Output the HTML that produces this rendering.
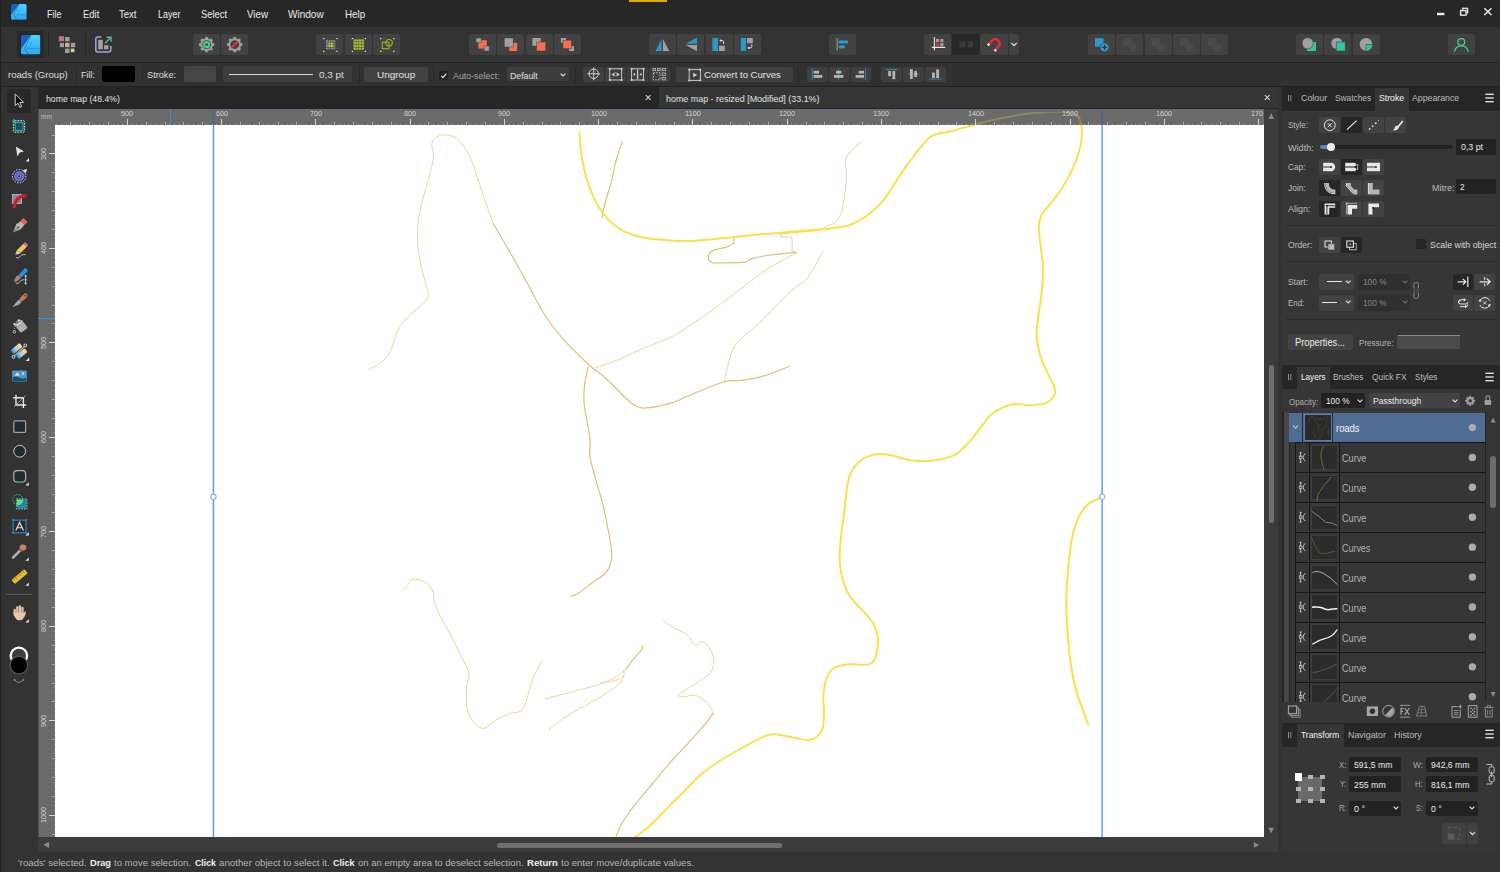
<!DOCTYPE html>
<html><head><meta charset="utf-8"><title>Affinity Designer</title>
<style>
html,body{margin:0;padding:0;background:#333333;}
body{width:1500px;height:872px;position:relative;overflow:hidden;font-family:"Liberation Sans",sans-serif;}
#r div,#r svg,#r span{position:absolute;}
#r svg{overflow:visible;}
.t{white-space:nowrap;transform-origin:0 50%;display:block;}
</style></head><body><div id="r">
<div style="left:0px;top:0px;width:1500px;height:27px;background:#272727;"></div>
<div style="left:0px;top:27px;width:1500px;height:35px;background:#333333;"></div>
<div style="left:0px;top:62px;width:1500px;height:1px;background:#212121;"></div>
<div style="left:0px;top:63px;width:1500px;height:23px;background:#313131;"></div>
<div style="left:0px;top:86px;width:1500px;height:1px;background:#212121;"></div>
<div style="left:0px;top:87px;width:38px;height:765px;background:#333333;"></div>
<div style="left:38px;top:87px;width:1240px;height:22px;background:#262626;"></div>
<div style="left:659px;top:87px;width:619px;height:21px;background:#353535;"></div>
<div style="left:38px;top:109px;width:1226px;height:16px;background:#6b6b6b;"></div>
<div style="left:38px;top:109px;width:17px;height:728px;background:#6b6b6b;"></div>
<div style="left:55px;top:125px;width:1209px;height:712px;background:#ffffff;"></div>
<div style="left:1264px;top:109px;width:14px;height:743px;background:#3c3c3c;"></div>
<div style="left:38px;top:837px;width:1240px;height:15px;background:#3c3c3c;"></div>
<div style="left:1278px;top:87px;width:4px;height:765px;background:#333333;"></div>
<div style="left:1282px;top:87px;width:218px;height:765px;background:#363636;"></div>
<div style="left:0px;top:852px;width:1500px;height:20px;background:#333333;"></div>
<div style="left:0px;top:0px;width:1px;height:872px;background:#1f1f1a;"></div>
<div style="left:629px;top:0px;width:38px;height:2px;background:#e8a700;"></div>
<svg style="left:55px;top:125px;overflow:hidden" width="1209" height="712" viewBox="55 125 1209 712"><path d="M368.5 369.6C370.4 368.5 376.7 366.0 380.2 363.2C383.8 360.4 387.5 356.5 389.8 352.5C392.2 348.6 392.8 343.6 394.5 339.4C396.1 335.1 397.1 331.1 399.8 326.9C402.5 322.8 406.6 318.3 410.5 314.5C414.3 310.6 419.9 307.1 422.9 303.8C425.9 300.6 427.8 298.5 428.2 294.9C428.7 291.4 426.7 287.8 425.4 282.5C424.1 277.1 421.7 269.7 420.4 262.9C419.1 256.1 417.9 248.7 417.6 241.6C417.2 234.5 417.4 227.4 418.3 220.2C419.2 213.1 421.1 206.0 422.9 198.9C424.7 191.8 427.2 184.7 428.9 177.6C430.7 170.5 433.1 161.9 433.6 156.2C434.0 150.6 431.2 147.0 431.8 143.8C432.4 140.5 434.8 138.2 437.1 136.7C439.5 135.2 442.8 134.6 446.0 134.9C449.3 135.2 453.4 136.1 456.7 138.4C459.9 140.8 462.9 145.0 465.6 149.1C468.2 153.3 470.3 157.4 472.7 163.3C475.1 169.3 477.4 177.6 479.8 184.7C482.2 191.8 484.7 199.5 486.9 206.0C489.2 212.5 492.2 220.8 493.3 223.8" fill="none" stroke="#eacd9a" stroke-width="0.9" stroke-linecap="round" stroke-linejoin="round"/><path d="M595.4 367.8C599.5 366.3 612.0 362.3 620.3 358.9C628.6 355.6 636.3 351.4 645.2 347.6C654.1 343.7 664.7 340.4 673.6 335.8C682.5 331.2 690.2 325.4 698.5 319.8C706.8 314.2 715.7 307.7 723.4 302.0C731.1 296.4 737.6 291.4 744.7 286.0C751.8 280.7 759.6 274.5 766.1 270.0C772.6 265.6 778.8 262.2 783.9 259.4C788.9 256.5 794.2 254.0 796.3 253.0" fill="none" stroke="#eacd9a" stroke-width="0.9" stroke-linecap="round" stroke-linejoin="round"/><path d="M796.3 252.2C795.6 252.2 792.7 252.2 792.0 252.2" fill="none" stroke="#eacd9a" stroke-width="0.9" stroke-linecap="round" stroke-linejoin="round"/><path d="M820.9 229.1C823.3 227.9 831.7 224.7 835.1 222.0C838.5 219.4 839.7 217.0 841.2 213.1C842.6 209.3 843.1 204.8 844.0 198.9C844.9 193.0 846.2 184.1 846.5 177.6C846.8 171.0 845.0 164.2 845.8 159.8C846.6 155.3 848.5 154.0 851.1 150.9C853.8 147.8 860.0 142.9 861.8 141.3" fill="none" stroke="#eacd9a" stroke-width="0.9" stroke-linecap="round" stroke-linejoin="round"/><path d="M823.0 251.2C821.8 253.4 818.8 259.8 815.9 264.7C812.9 269.6 808.7 276.8 805.2 280.7C801.6 284.5 798.7 284.3 794.5 287.8C790.4 291.4 785.6 296.7 780.3 302.0C775.0 307.4 768.4 314.2 762.5 319.8C756.6 325.4 749.5 331.4 744.7 335.8C740.0 340.3 736.7 342.0 734.1 346.5C731.4 350.9 730.4 356.6 728.7 362.5C727.1 368.4 724.9 378.8 724.1 382.0" fill="none" stroke="#eacd9a" stroke-width="0.9" stroke-linecap="round" stroke-linejoin="round"/><path d="M402.6 591.3C403.3 590.5 405.6 588.4 406.9 586.7C408.2 584.9 408.7 581.8 410.5 580.6C412.2 579.4 414.9 579.1 417.6 579.6C420.2 580.0 424.0 581.3 426.5 583.1C428.9 584.9 431.1 587.0 432.5 590.2C433.9 593.5 433.3 598.2 434.6 602.7C436.0 607.1 438.2 611.9 440.7 616.9C443.2 621.9 446.6 627.3 449.6 632.9C452.5 638.5 455.8 645.3 458.5 650.7C461.1 656.0 463.8 660.8 465.6 664.9C467.4 669.1 469.0 672.0 469.1 675.6C469.3 679.1 467.1 681.2 466.6 686.2C466.2 691.3 465.9 700.5 466.6 705.8C467.4 711.1 469.0 714.8 470.9 718.3C472.8 721.7 475.7 724.8 478.0 726.4C480.4 728.0 482.2 728.9 485.1 727.9C488.1 726.8 491.7 722.4 495.8 720.0C500.0 717.7 505.9 715.1 510.0 713.6C514.2 712.1 518.0 713.0 520.7 711.1C523.4 709.2 524.5 706.1 526.0 702.2C527.5 698.4 528.1 692.8 529.6 688.0C531.1 683.3 532.8 678.4 534.9 673.8C537.0 669.2 540.8 662.8 542.0 660.6" fill="none" stroke="#eacd9a" stroke-width="0.9" stroke-linecap="round" stroke-linejoin="round"/><path d="M545.6 698.7C549.7 697.6 561.6 694.7 570.5 692.3C579.4 689.9 591.5 687.0 598.9 684.5C606.3 682.0 610.5 679.8 614.9 677.4C619.4 674.9 623.8 670.8 625.6 669.5" fill="none" stroke="#eacd9a" stroke-width="0.9" stroke-linecap="round" stroke-linejoin="round"/><path d="M549.1 729.6C551.5 727.7 557.4 722.2 563.4 718.3C569.3 714.3 577.6 710.0 584.7 705.8C591.8 701.7 600.1 697.2 606.0 693.4C612.0 689.5 617.3 685.7 620.3 682.7C623.2 679.7 623.2 677.7 623.8 675.6C624.4 673.5 623.8 671.1 623.8 670.2" fill="none" stroke="#eacd9a" stroke-width="0.9" stroke-linecap="round" stroke-linejoin="round"/><path d="M600.7 682.7C603.4 682.3 612.9 681.4 616.7 680.2C620.6 679.0 622.6 676.3 623.8 675.6" fill="none" stroke="#eacd9a" stroke-width="0.9" stroke-linecap="round" stroke-linejoin="round"/><path d="M662.9 620.5C664.7 621.6 669.5 625.1 673.6 627.6C677.8 630.1 684.6 632.7 687.8 635.4C691.1 638.1 691.5 641.9 693.2 643.6C694.8 645.2 696.6 645.6 697.8 645.3C699.0 645.1 699.0 642.1 700.3 641.8C701.6 641.5 703.8 642.1 705.6 643.6C707.4 645.1 709.6 647.7 711.0 650.7C712.3 653.6 713.8 657.8 713.8 661.4C713.8 664.9 712.9 669.1 711.0 672.0C709.0 675.0 705.9 676.3 702.1 679.1C698.2 681.9 691.8 686.1 687.8 688.7C683.9 691.4 678.8 693.8 678.2 695.1C677.6 696.5 681.8 696.9 684.3 696.9C686.8 696.9 690.2 694.8 693.2 695.1C696.1 695.4 699.4 696.9 702.1 698.7C704.7 700.5 707.3 703.4 709.2 705.8C711.1 708.2 712.7 711.7 713.4 712.9" fill="none" stroke="#eacd9a" stroke-width="0.9" stroke-linecap="round" stroke-linejoin="round"/><polyline points="792.0,252.2 792.0,237.3 781.0,237.0 781.0,233.8" fill="none" stroke="#eacd9a" stroke-width="0.9"/><path d="M493.3 223.8C496.1 228.5 504.3 242.2 510.0 252.2C515.8 262.3 521.9 273.6 527.8 284.3C533.7 294.9 539.7 307.1 545.6 316.3C551.5 325.4 556.3 331.4 563.4 339.4C570.5 347.4 581.2 357.7 588.3 364.3C595.4 370.8 600.1 373.2 606.0 378.5C612.0 383.8 619.1 391.8 623.8 396.3C628.6 400.7 630.9 403.2 634.5 405.2C638.1 407.1 639.2 408.3 645.2 408.0C651.1 407.7 662.4 405.6 670.1 403.4C677.8 401.1 682.5 398.1 691.4 394.5C700.3 390.9 715.1 384.4 723.4 382.0C731.7 379.7 735.3 381.0 741.2 380.3C747.1 379.5 753.0 378.9 759.0 377.4C764.9 375.9 771.6 373.3 776.7 371.4C781.9 369.5 787.7 366.9 789.9 366.0" fill="none" stroke="#e4bd78" stroke-width="1.2" stroke-linecap="round" stroke-linejoin="round"/><path d="M588.3 366.8C587.7 369.6 585.4 378.0 584.7 383.8C584.0 389.6 583.7 395.9 584.0 401.6C584.3 407.3 585.5 411.5 586.5 417.8C587.5 424.0 589.4 432.6 590.0 439.1C590.6 445.6 589.2 450.4 590.0 456.9C590.9 463.4 593.3 470.5 595.4 478.2C597.5 485.9 600.4 494.8 602.5 503.1C604.6 511.4 606.3 520.3 607.8 528.0C609.3 535.7 610.8 544.0 611.4 549.4C612.0 554.7 612.3 556.2 611.4 560.0C610.5 563.9 609.3 568.6 606.0 572.5C602.8 576.3 596.6 579.6 591.8 583.1C587.1 586.7 581.0 591.6 577.6 593.8C574.2 596.0 572.3 595.9 571.2 596.3" fill="none" stroke="#e4bd78" stroke-width="1.2" stroke-linecap="round" stroke-linejoin="round"/><path d="M733.4 238.7C733.4 239.5 734.4 242.0 733.4 243.4C732.3 244.7 730.4 245.7 727.0 246.9C723.5 248.1 715.8 249.0 712.7 250.5C709.6 252.0 708.8 253.8 708.5 255.8C708.2 257.8 708.5 261.0 711.0 262.2C713.4 263.4 717.8 262.9 723.4 262.9C729.0 262.9 740.0 262.9 744.7 262.2C749.5 261.5 747.7 259.8 751.8 258.6C756.0 257.5 762.2 256.2 769.6 255.1C777.0 254.0 791.9 252.7 796.3 252.2" fill="none" stroke="#e4bd78" stroke-width="1.2" stroke-linecap="round" stroke-linejoin="round"/><path d="M601.8 217.8C602.2 215.8 603.3 210.0 604.3 206.0C605.3 202.0 606.5 198.3 607.8 193.6C609.2 188.8 611.3 182.3 612.4 177.6C613.6 172.8 613.9 169.3 614.9 165.1C615.9 161.0 617.2 156.6 618.5 152.7C619.7 148.7 621.8 143.2 622.4 141.3" fill="none" stroke="#e4bd78" stroke-width="1.2" stroke-linecap="round" stroke-linejoin="round"/><path d="M625.6 669.5C627.1 667.6 631.7 661.2 634.5 657.8C637.3 654.4 641.1 651.0 642.3 648.9C643.5 646.8 641.7 645.9 641.6 645.3" fill="none" stroke="#e4bd78" stroke-width="1.2" stroke-linecap="round" stroke-linejoin="round"/><path d="M713.4 712.9C712.1 714.7 709.3 719.1 705.6 723.6C701.9 728.0 697.3 733.1 691.4 739.6C685.5 746.1 676.6 755.3 670.1 762.7C663.5 770.1 658.2 776.9 652.3 784.0C646.3 791.2 639.5 798.9 634.5 805.4C629.5 811.9 625.1 817.9 622.0 823.2C619.0 828.4 617.5 833.1 616.0 836.7C614.5 840.2 613.6 843.2 613.2 844.5" fill="none" stroke="#e4bd78" stroke-width="1.2" stroke-linecap="round" stroke-linejoin="round"/><path d="M579.4 133.1C579.7 136.4 580.1 145.9 581.2 152.7C582.2 159.5 583.3 166.6 585.4 174.0C587.5 181.4 590.5 190.3 593.6 197.1C596.7 203.9 599.8 209.6 604.3 214.9C608.7 220.2 614.0 225.4 620.3 229.1C626.5 232.9 633.3 235.4 641.6 237.3C649.9 239.2 661.8 239.9 670.1 240.5C678.4 241.1 682.5 241.3 691.4 240.9C700.3 240.5 712.1 239.1 723.4 238.0C734.7 237.0 747.1 235.5 759.0 234.5C770.8 233.4 783.9 232.5 794.5 231.6C805.2 230.7 825.4 228.8 823.0 229.1C820.6 229.4 781.2 233.2 780.0 233.4C778.8 233.6 804.3 231.5 815.6 230.2C826.8 228.9 839.3 227.8 847.6 225.6C855.9 223.3 859.4 220.8 865.3 216.7C871.3 212.5 876.6 208.7 883.1 200.7C889.6 192.7 896.8 179.2 904.5 168.7C912.2 158.2 921.7 144.0 929.4 137.7C937.1 131.5 942.4 133.7 950.7 131.3C959.0 129.0 969.7 125.9 979.1 123.5C988.6 121.1 998.1 118.9 1007.6 117.1C1017.1 115.3 1026.6 113.7 1036.0 112.8C1045.5 112.0 1057.7 111.4 1064.5 111.8C1071.3 112.2 1074.1 112.7 1076.9 115.3C1079.8 118.0 1081.0 122.7 1081.6 127.8C1082.2 132.8 1081.9 139.0 1080.5 145.6C1079.1 152.1 1076.6 159.5 1073.4 166.9C1070.1 174.3 1065.1 183.5 1060.9 190.0C1056.8 196.5 1051.8 201.9 1048.5 206.0C1045.2 210.2 1043.0 211.4 1041.4 214.9C1039.8 218.5 1038.9 221.1 1038.9 227.4C1038.9 233.6 1040.7 245.1 1041.4 252.2C1042.1 259.4 1043.2 262.9 1043.2 270.0C1043.2 277.1 1042.3 286.6 1041.4 294.9C1040.5 303.2 1038.6 312.7 1037.8 319.8C1037.1 326.9 1036.2 331.1 1036.8 337.6C1037.3 344.1 1039.4 352.7 1041.4 358.9C1043.3 365.2 1046.3 370.2 1048.5 374.9C1050.7 379.7 1053.6 383.8 1054.5 387.4C1055.4 390.9 1055.4 393.6 1053.8 396.3C1052.2 398.9 1049.1 401.9 1044.9 403.4C1040.8 404.9 1034.0 405.0 1028.9 405.2C1023.9 405.3 1019.4 403.5 1014.7 404.1C1010.0 404.7 1004.6 406.8 1000.5 408.7C996.3 410.7 992.8 413.1 989.8 415.8C986.9 418.5 986.3 420.4 982.7 424.9C979.1 429.4 973.2 437.6 968.5 442.7C963.7 447.7 960.2 452.2 954.3 455.1C948.3 458.1 940.0 459.6 932.9 460.5C925.8 461.3 918.1 461.2 911.6 460.5C905.1 459.7 899.1 456.9 893.8 455.8C888.5 454.8 884.6 453.6 879.6 454.1C874.5 454.5 868.0 456.1 863.6 458.7C859.1 461.2 855.6 465.2 852.9 469.3C850.2 473.5 849.0 476.2 847.6 483.6C846.1 491.0 845.2 504.0 844.0 513.8C842.8 523.6 841.2 534.5 840.5 542.2C839.7 550.0 839.4 554.1 839.7 560.0C840.0 566.0 840.6 571.9 842.2 577.8C843.8 583.7 846.1 590.3 849.3 595.6C852.6 600.9 857.9 605.4 861.8 609.8C865.6 614.3 869.8 617.8 872.5 622.3C875.1 626.7 877.1 631.4 877.8 636.5C878.5 641.5 877.6 648.2 876.7 652.5C875.8 656.8 874.7 660.4 872.5 662.4C870.3 664.5 867.7 664.6 863.6 664.9C859.4 665.2 852.6 663.6 847.6 664.2C842.5 664.8 836.9 666.0 833.3 668.5C829.8 671.0 827.9 674.7 826.2 679.2C824.6 683.6 823.8 689.5 823.4 695.2C823.0 700.9 824.1 707.8 824.0 713.3C823.9 718.9 823.9 724.4 822.7 728.3C821.4 732.2 819.1 734.7 816.7 736.7C814.3 738.6 811.7 739.7 808.3 740.0C805.0 740.3 802.2 739.3 796.7 738.3C791.1 737.4 780.7 734.5 775.0 734.3C769.3 734.0 768.1 734.7 762.5 737.1C756.9 739.5 748.3 744.5 741.2 748.5C734.1 752.4 726.4 756.8 719.8 760.9C713.3 765.1 708.0 768.3 702.1 773.4C696.1 778.4 690.2 785.2 684.3 791.2C678.4 797.1 672.4 803.0 666.5 808.9C660.6 814.9 654.1 822.0 648.7 826.7C643.4 831.5 638.6 834.4 634.5 837.4C630.3 840.3 625.6 843.3 623.8 844.5" fill="none" stroke="#fbe04e" stroke-width="2.0" stroke-linecap="round" stroke-linejoin="round"/><path d="M1100.1 497.8C1098.3 498.7 1092.6 500.5 1089.4 503.1C1086.1 505.8 1083.2 509.1 1080.5 513.8C1077.8 518.5 1075.2 525.1 1073.4 531.6C1071.6 538.1 1070.8 545.2 1069.8 552.9C1068.8 560.6 1067.9 570.1 1067.3 577.8C1066.7 585.5 1066.4 592.1 1066.3 599.1C1066.2 606.2 1066.3 612.1 1066.7 620.0C1067.1 627.9 1067.8 638.3 1068.7 646.7C1069.5 655.0 1070.4 662.8 1071.7 670.0C1072.9 677.2 1074.3 683.9 1076.0 690.0C1077.7 696.1 1079.6 700.8 1081.7 706.7C1083.7 712.5 1087.2 721.9 1088.3 725.0" fill="none" stroke="#fbe04e" stroke-width="2.0" stroke-linecap="round" stroke-linejoin="round"/></svg>
<svg style="left:0;top:0" width="1500" height="872"><rect x="56" y="124" width="1" height="1" fill="#fff" fill-opacity="0.36"/><rect x="61" y="124" width="1" height="1" fill="#fff" fill-opacity="0.36"/><rect x="66" y="124" width="1" height="1" fill="#fff" fill-opacity="0.36"/><rect x="70" y="122" width="1" height="3" fill="#fff" fill-opacity="0.46"/><rect x="75" y="124" width="1" height="1" fill="#fff" fill-opacity="0.36"/><rect x="80" y="124" width="1" height="1" fill="#fff" fill-opacity="0.36"/><rect x="84" y="124" width="1" height="1" fill="#fff" fill-opacity="0.36"/><rect x="89" y="122" width="1" height="3" fill="#fff" fill-opacity="0.46"/><rect x="94" y="124" width="1" height="1" fill="#fff" fill-opacity="0.36"/><rect x="99" y="124" width="1" height="1" fill="#fff" fill-opacity="0.36"/><rect x="103" y="124" width="1" height="1" fill="#fff" fill-opacity="0.36"/><rect x="108" y="122" width="1" height="3" fill="#fff" fill-opacity="0.46"/><rect x="113" y="124" width="1" height="1" fill="#fff" fill-opacity="0.36"/><rect x="117" y="124" width="1" height="1" fill="#fff" fill-opacity="0.36"/><rect x="122" y="124" width="1" height="1" fill="#fff" fill-opacity="0.36"/><rect x="127" y="119" width="1" height="6" fill="#fff" fill-opacity="0.72"/><rect x="132" y="124" width="1" height="1" fill="#fff" fill-opacity="0.36"/><rect x="136" y="124" width="1" height="1" fill="#fff" fill-opacity="0.36"/><rect x="141" y="124" width="1" height="1" fill="#fff" fill-opacity="0.36"/><rect x="146" y="122" width="1" height="3" fill="#fff" fill-opacity="0.46"/><rect x="150" y="124" width="1" height="1" fill="#fff" fill-opacity="0.36"/><rect x="155" y="124" width="1" height="1" fill="#fff" fill-opacity="0.36"/><rect x="160" y="124" width="1" height="1" fill="#fff" fill-opacity="0.36"/><rect x="165" y="122" width="1" height="3" fill="#fff" fill-opacity="0.46"/><rect x="169" y="124" width="1" height="1" fill="#fff" fill-opacity="0.36"/><rect x="174" y="124" width="1" height="1" fill="#fff" fill-opacity="0.36"/><rect x="179" y="124" width="1" height="1" fill="#fff" fill-opacity="0.36"/><rect x="183" y="122" width="1" height="3" fill="#fff" fill-opacity="0.46"/><rect x="188" y="124" width="1" height="1" fill="#fff" fill-opacity="0.36"/><rect x="193" y="124" width="1" height="1" fill="#fff" fill-opacity="0.36"/><rect x="198" y="124" width="1" height="1" fill="#fff" fill-opacity="0.36"/><rect x="202" y="122" width="1" height="3" fill="#fff" fill-opacity="0.46"/><rect x="207" y="124" width="1" height="1" fill="#fff" fill-opacity="0.36"/><rect x="212" y="124" width="1" height="1" fill="#fff" fill-opacity="0.36"/><rect x="216" y="124" width="1" height="1" fill="#fff" fill-opacity="0.36"/><rect x="221" y="119" width="1" height="6" fill="#fff" fill-opacity="0.72"/><rect x="226" y="124" width="1" height="1" fill="#fff" fill-opacity="0.36"/><rect x="230" y="124" width="1" height="1" fill="#fff" fill-opacity="0.36"/><rect x="235" y="124" width="1" height="1" fill="#fff" fill-opacity="0.36"/><rect x="240" y="122" width="1" height="3" fill="#fff" fill-opacity="0.46"/><rect x="245" y="124" width="1" height="1" fill="#fff" fill-opacity="0.36"/><rect x="249" y="124" width="1" height="1" fill="#fff" fill-opacity="0.36"/><rect x="254" y="124" width="1" height="1" fill="#fff" fill-opacity="0.36"/><rect x="259" y="122" width="1" height="3" fill="#fff" fill-opacity="0.46"/><rect x="263" y="124" width="1" height="1" fill="#fff" fill-opacity="0.36"/><rect x="268" y="124" width="1" height="1" fill="#fff" fill-opacity="0.36"/><rect x="273" y="124" width="1" height="1" fill="#fff" fill-opacity="0.36"/><rect x="278" y="122" width="1" height="3" fill="#fff" fill-opacity="0.46"/><rect x="282" y="124" width="1" height="1" fill="#fff" fill-opacity="0.36"/><rect x="287" y="124" width="1" height="1" fill="#fff" fill-opacity="0.36"/><rect x="292" y="124" width="1" height="1" fill="#fff" fill-opacity="0.36"/><rect x="296" y="122" width="1" height="3" fill="#fff" fill-opacity="0.46"/><rect x="301" y="124" width="1" height="1" fill="#fff" fill-opacity="0.36"/><rect x="306" y="124" width="1" height="1" fill="#fff" fill-opacity="0.36"/><rect x="311" y="124" width="1" height="1" fill="#fff" fill-opacity="0.36"/><rect x="315" y="119" width="1" height="6" fill="#fff" fill-opacity="0.72"/><rect x="320" y="124" width="1" height="1" fill="#fff" fill-opacity="0.36"/><rect x="325" y="124" width="1" height="1" fill="#fff" fill-opacity="0.36"/><rect x="329" y="124" width="1" height="1" fill="#fff" fill-opacity="0.36"/><rect x="334" y="122" width="1" height="3" fill="#fff" fill-opacity="0.46"/><rect x="339" y="124" width="1" height="1" fill="#fff" fill-opacity="0.36"/><rect x="344" y="124" width="1" height="1" fill="#fff" fill-opacity="0.36"/><rect x="348" y="124" width="1" height="1" fill="#fff" fill-opacity="0.36"/><rect x="353" y="122" width="1" height="3" fill="#fff" fill-opacity="0.46"/><rect x="358" y="124" width="1" height="1" fill="#fff" fill-opacity="0.36"/><rect x="362" y="124" width="1" height="1" fill="#fff" fill-opacity="0.36"/><rect x="367" y="124" width="1" height="1" fill="#fff" fill-opacity="0.36"/><rect x="372" y="122" width="1" height="3" fill="#fff" fill-opacity="0.46"/><rect x="377" y="124" width="1" height="1" fill="#fff" fill-opacity="0.36"/><rect x="381" y="124" width="1" height="1" fill="#fff" fill-opacity="0.36"/><rect x="386" y="124" width="1" height="1" fill="#fff" fill-opacity="0.36"/><rect x="391" y="122" width="1" height="3" fill="#fff" fill-opacity="0.46"/><rect x="395" y="124" width="1" height="1" fill="#fff" fill-opacity="0.36"/><rect x="400" y="124" width="1" height="1" fill="#fff" fill-opacity="0.36"/><rect x="405" y="124" width="1" height="1" fill="#fff" fill-opacity="0.36"/><rect x="410" y="119" width="1" height="6" fill="#fff" fill-opacity="0.72"/><rect x="414" y="124" width="1" height="1" fill="#fff" fill-opacity="0.36"/><rect x="419" y="124" width="1" height="1" fill="#fff" fill-opacity="0.36"/><rect x="424" y="124" width="1" height="1" fill="#fff" fill-opacity="0.36"/><rect x="428" y="122" width="1" height="3" fill="#fff" fill-opacity="0.46"/><rect x="433" y="124" width="1" height="1" fill="#fff" fill-opacity="0.36"/><rect x="438" y="124" width="1" height="1" fill="#fff" fill-opacity="0.36"/><rect x="443" y="124" width="1" height="1" fill="#fff" fill-opacity="0.36"/><rect x="447" y="122" width="1" height="3" fill="#fff" fill-opacity="0.46"/><rect x="452" y="124" width="1" height="1" fill="#fff" fill-opacity="0.36"/><rect x="457" y="124" width="1" height="1" fill="#fff" fill-opacity="0.36"/><rect x="461" y="124" width="1" height="1" fill="#fff" fill-opacity="0.36"/><rect x="466" y="122" width="1" height="3" fill="#fff" fill-opacity="0.46"/><rect x="471" y="124" width="1" height="1" fill="#fff" fill-opacity="0.36"/><rect x="476" y="124" width="1" height="1" fill="#fff" fill-opacity="0.36"/><rect x="480" y="124" width="1" height="1" fill="#fff" fill-opacity="0.36"/><rect x="485" y="122" width="1" height="3" fill="#fff" fill-opacity="0.46"/><rect x="490" y="124" width="1" height="1" fill="#fff" fill-opacity="0.36"/><rect x="494" y="124" width="1" height="1" fill="#fff" fill-opacity="0.36"/><rect x="499" y="124" width="1" height="1" fill="#fff" fill-opacity="0.36"/><rect x="504" y="119" width="1" height="6" fill="#fff" fill-opacity="0.72"/><rect x="509" y="124" width="1" height="1" fill="#fff" fill-opacity="0.36"/><rect x="513" y="124" width="1" height="1" fill="#fff" fill-opacity="0.36"/><rect x="518" y="124" width="1" height="1" fill="#fff" fill-opacity="0.36"/><rect x="523" y="122" width="1" height="3" fill="#fff" fill-opacity="0.46"/><rect x="527" y="124" width="1" height="1" fill="#fff" fill-opacity="0.36"/><rect x="532" y="124" width="1" height="1" fill="#fff" fill-opacity="0.36"/><rect x="537" y="124" width="1" height="1" fill="#fff" fill-opacity="0.36"/><rect x="542" y="122" width="1" height="3" fill="#fff" fill-opacity="0.46"/><rect x="546" y="124" width="1" height="1" fill="#fff" fill-opacity="0.36"/><rect x="551" y="124" width="1" height="1" fill="#fff" fill-opacity="0.36"/><rect x="556" y="124" width="1" height="1" fill="#fff" fill-opacity="0.36"/><rect x="560" y="122" width="1" height="3" fill="#fff" fill-opacity="0.46"/><rect x="565" y="124" width="1" height="1" fill="#fff" fill-opacity="0.36"/><rect x="570" y="124" width="1" height="1" fill="#fff" fill-opacity="0.36"/><rect x="575" y="124" width="1" height="1" fill="#fff" fill-opacity="0.36"/><rect x="579" y="122" width="1" height="3" fill="#fff" fill-opacity="0.46"/><rect x="584" y="124" width="1" height="1" fill="#fff" fill-opacity="0.36"/><rect x="589" y="124" width="1" height="1" fill="#fff" fill-opacity="0.36"/><rect x="593" y="124" width="1" height="1" fill="#fff" fill-opacity="0.36"/><rect x="598" y="119" width="1" height="6" fill="#fff" fill-opacity="0.72"/><rect x="603" y="124" width="1" height="1" fill="#fff" fill-opacity="0.36"/><rect x="608" y="124" width="1" height="1" fill="#fff" fill-opacity="0.36"/><rect x="612" y="124" width="1" height="1" fill="#fff" fill-opacity="0.36"/><rect x="617" y="122" width="1" height="3" fill="#fff" fill-opacity="0.46"/><rect x="622" y="124" width="1" height="1" fill="#fff" fill-opacity="0.36"/><rect x="626" y="124" width="1" height="1" fill="#fff" fill-opacity="0.36"/><rect x="631" y="124" width="1" height="1" fill="#fff" fill-opacity="0.36"/><rect x="636" y="122" width="1" height="3" fill="#fff" fill-opacity="0.46"/><rect x="641" y="124" width="1" height="1" fill="#fff" fill-opacity="0.36"/><rect x="645" y="124" width="1" height="1" fill="#fff" fill-opacity="0.36"/><rect x="650" y="124" width="1" height="1" fill="#fff" fill-opacity="0.36"/><rect x="655" y="122" width="1" height="3" fill="#fff" fill-opacity="0.46"/><rect x="659" y="124" width="1" height="1" fill="#fff" fill-opacity="0.36"/><rect x="664" y="124" width="1" height="1" fill="#fff" fill-opacity="0.36"/><rect x="669" y="124" width="1" height="1" fill="#fff" fill-opacity="0.36"/><rect x="674" y="122" width="1" height="3" fill="#fff" fill-opacity="0.46"/><rect x="678" y="124" width="1" height="1" fill="#fff" fill-opacity="0.36"/><rect x="683" y="124" width="1" height="1" fill="#fff" fill-opacity="0.36"/><rect x="688" y="124" width="1" height="1" fill="#fff" fill-opacity="0.36"/><rect x="692" y="119" width="1" height="6" fill="#fff" fill-opacity="0.72"/><rect x="697" y="124" width="1" height="1" fill="#fff" fill-opacity="0.36"/><rect x="702" y="124" width="1" height="1" fill="#fff" fill-opacity="0.36"/><rect x="707" y="124" width="1" height="1" fill="#fff" fill-opacity="0.36"/><rect x="711" y="122" width="1" height="3" fill="#fff" fill-opacity="0.46"/><rect x="716" y="124" width="1" height="1" fill="#fff" fill-opacity="0.36"/><rect x="721" y="124" width="1" height="1" fill="#fff" fill-opacity="0.36"/><rect x="725" y="124" width="1" height="1" fill="#fff" fill-opacity="0.36"/><rect x="730" y="122" width="1" height="3" fill="#fff" fill-opacity="0.46"/><rect x="735" y="124" width="1" height="1" fill="#fff" fill-opacity="0.36"/><rect x="740" y="124" width="1" height="1" fill="#fff" fill-opacity="0.36"/><rect x="744" y="124" width="1" height="1" fill="#fff" fill-opacity="0.36"/><rect x="749" y="122" width="1" height="3" fill="#fff" fill-opacity="0.46"/><rect x="754" y="124" width="1" height="1" fill="#fff" fill-opacity="0.36"/><rect x="758" y="124" width="1" height="1" fill="#fff" fill-opacity="0.36"/><rect x="763" y="124" width="1" height="1" fill="#fff" fill-opacity="0.36"/><rect x="768" y="122" width="1" height="3" fill="#fff" fill-opacity="0.46"/><rect x="773" y="124" width="1" height="1" fill="#fff" fill-opacity="0.36"/><rect x="777" y="124" width="1" height="1" fill="#fff" fill-opacity="0.36"/><rect x="782" y="124" width="1" height="1" fill="#fff" fill-opacity="0.36"/><rect x="787" y="119" width="1" height="6" fill="#fff" fill-opacity="0.72"/><rect x="791" y="124" width="1" height="1" fill="#fff" fill-opacity="0.36"/><rect x="796" y="124" width="1" height="1" fill="#fff" fill-opacity="0.36"/><rect x="801" y="124" width="1" height="1" fill="#fff" fill-opacity="0.36"/><rect x="806" y="122" width="1" height="3" fill="#fff" fill-opacity="0.46"/><rect x="810" y="124" width="1" height="1" fill="#fff" fill-opacity="0.36"/><rect x="815" y="124" width="1" height="1" fill="#fff" fill-opacity="0.36"/><rect x="820" y="124" width="1" height="1" fill="#fff" fill-opacity="0.36"/><rect x="824" y="122" width="1" height="3" fill="#fff" fill-opacity="0.46"/><rect x="829" y="124" width="1" height="1" fill="#fff" fill-opacity="0.36"/><rect x="834" y="124" width="1" height="1" fill="#fff" fill-opacity="0.36"/><rect x="839" y="124" width="1" height="1" fill="#fff" fill-opacity="0.36"/><rect x="843" y="122" width="1" height="3" fill="#fff" fill-opacity="0.46"/><rect x="848" y="124" width="1" height="1" fill="#fff" fill-opacity="0.36"/><rect x="853" y="124" width="1" height="1" fill="#fff" fill-opacity="0.36"/><rect x="857" y="124" width="1" height="1" fill="#fff" fill-opacity="0.36"/><rect x="862" y="122" width="1" height="3" fill="#fff" fill-opacity="0.46"/><rect x="867" y="124" width="1" height="1" fill="#fff" fill-opacity="0.36"/><rect x="872" y="124" width="1" height="1" fill="#fff" fill-opacity="0.36"/><rect x="876" y="124" width="1" height="1" fill="#fff" fill-opacity="0.36"/><rect x="881" y="119" width="1" height="6" fill="#fff" fill-opacity="0.72"/><rect x="886" y="124" width="1" height="1" fill="#fff" fill-opacity="0.36"/><rect x="890" y="124" width="1" height="1" fill="#fff" fill-opacity="0.36"/><rect x="895" y="124" width="1" height="1" fill="#fff" fill-opacity="0.36"/><rect x="900" y="122" width="1" height="3" fill="#fff" fill-opacity="0.46"/><rect x="905" y="124" width="1" height="1" fill="#fff" fill-opacity="0.36"/><rect x="909" y="124" width="1" height="1" fill="#fff" fill-opacity="0.36"/><rect x="914" y="124" width="1" height="1" fill="#fff" fill-opacity="0.36"/><rect x="919" y="122" width="1" height="3" fill="#fff" fill-opacity="0.46"/><rect x="923" y="124" width="1" height="1" fill="#fff" fill-opacity="0.36"/><rect x="928" y="124" width="1" height="1" fill="#fff" fill-opacity="0.36"/><rect x="933" y="124" width="1" height="1" fill="#fff" fill-opacity="0.36"/><rect x="938" y="122" width="1" height="3" fill="#fff" fill-opacity="0.46"/><rect x="942" y="124" width="1" height="1" fill="#fff" fill-opacity="0.36"/><rect x="947" y="124" width="1" height="1" fill="#fff" fill-opacity="0.36"/><rect x="952" y="124" width="1" height="1" fill="#fff" fill-opacity="0.36"/><rect x="956" y="122" width="1" height="3" fill="#fff" fill-opacity="0.46"/><rect x="961" y="124" width="1" height="1" fill="#fff" fill-opacity="0.36"/><rect x="966" y="124" width="1" height="1" fill="#fff" fill-opacity="0.36"/><rect x="971" y="124" width="1" height="1" fill="#fff" fill-opacity="0.36"/><rect x="975" y="119" width="1" height="6" fill="#fff" fill-opacity="0.72"/><rect x="980" y="124" width="1" height="1" fill="#fff" fill-opacity="0.36"/><rect x="985" y="124" width="1" height="1" fill="#fff" fill-opacity="0.36"/><rect x="989" y="124" width="1" height="1" fill="#fff" fill-opacity="0.36"/><rect x="994" y="122" width="1" height="3" fill="#fff" fill-opacity="0.46"/><rect x="999" y="124" width="1" height="1" fill="#fff" fill-opacity="0.36"/><rect x="1004" y="124" width="1" height="1" fill="#fff" fill-opacity="0.36"/><rect x="1008" y="124" width="1" height="1" fill="#fff" fill-opacity="0.36"/><rect x="1013" y="122" width="1" height="3" fill="#fff" fill-opacity="0.46"/><rect x="1018" y="124" width="1" height="1" fill="#fff" fill-opacity="0.36"/><rect x="1022" y="124" width="1" height="1" fill="#fff" fill-opacity="0.36"/><rect x="1027" y="124" width="1" height="1" fill="#fff" fill-opacity="0.36"/><rect x="1032" y="122" width="1" height="3" fill="#fff" fill-opacity="0.46"/><rect x="1037" y="124" width="1" height="1" fill="#fff" fill-opacity="0.36"/><rect x="1041" y="124" width="1" height="1" fill="#fff" fill-opacity="0.36"/><rect x="1046" y="124" width="1" height="1" fill="#fff" fill-opacity="0.36"/><rect x="1051" y="122" width="1" height="3" fill="#fff" fill-opacity="0.46"/><rect x="1055" y="124" width="1" height="1" fill="#fff" fill-opacity="0.36"/><rect x="1060" y="124" width="1" height="1" fill="#fff" fill-opacity="0.36"/><rect x="1065" y="124" width="1" height="1" fill="#fff" fill-opacity="0.36"/><rect x="1070" y="119" width="1" height="6" fill="#fff" fill-opacity="0.72"/><rect x="1074" y="124" width="1" height="1" fill="#fff" fill-opacity="0.36"/><rect x="1079" y="124" width="1" height="1" fill="#fff" fill-opacity="0.36"/><rect x="1084" y="124" width="1" height="1" fill="#fff" fill-opacity="0.36"/><rect x="1088" y="122" width="1" height="3" fill="#fff" fill-opacity="0.46"/><rect x="1093" y="124" width="1" height="1" fill="#fff" fill-opacity="0.36"/><rect x="1098" y="124" width="1" height="1" fill="#fff" fill-opacity="0.36"/><rect x="1102" y="124" width="1" height="1" fill="#fff" fill-opacity="0.36"/><rect x="1107" y="122" width="1" height="3" fill="#fff" fill-opacity="0.46"/><rect x="1112" y="124" width="1" height="1" fill="#fff" fill-opacity="0.36"/><rect x="1117" y="124" width="1" height="1" fill="#fff" fill-opacity="0.36"/><rect x="1121" y="124" width="1" height="1" fill="#fff" fill-opacity="0.36"/><rect x="1126" y="122" width="1" height="3" fill="#fff" fill-opacity="0.46"/><rect x="1131" y="124" width="1" height="1" fill="#fff" fill-opacity="0.36"/><rect x="1135" y="124" width="1" height="1" fill="#fff" fill-opacity="0.36"/><rect x="1140" y="124" width="1" height="1" fill="#fff" fill-opacity="0.36"/><rect x="1145" y="122" width="1" height="3" fill="#fff" fill-opacity="0.46"/><rect x="1150" y="124" width="1" height="1" fill="#fff" fill-opacity="0.36"/><rect x="1154" y="124" width="1" height="1" fill="#fff" fill-opacity="0.36"/><rect x="1159" y="124" width="1" height="1" fill="#fff" fill-opacity="0.36"/><rect x="1164" y="119" width="1" height="6" fill="#fff" fill-opacity="0.72"/><rect x="1168" y="124" width="1" height="1" fill="#fff" fill-opacity="0.36"/><rect x="1173" y="124" width="1" height="1" fill="#fff" fill-opacity="0.36"/><rect x="1178" y="124" width="1" height="1" fill="#fff" fill-opacity="0.36"/><rect x="1183" y="122" width="1" height="3" fill="#fff" fill-opacity="0.46"/><rect x="1187" y="124" width="1" height="1" fill="#fff" fill-opacity="0.36"/><rect x="1192" y="124" width="1" height="1" fill="#fff" fill-opacity="0.36"/><rect x="1197" y="124" width="1" height="1" fill="#fff" fill-opacity="0.36"/><rect x="1201" y="122" width="1" height="3" fill="#fff" fill-opacity="0.46"/><rect x="1206" y="124" width="1" height="1" fill="#fff" fill-opacity="0.36"/><rect x="1211" y="124" width="1" height="1" fill="#fff" fill-opacity="0.36"/><rect x="1216" y="124" width="1" height="1" fill="#fff" fill-opacity="0.36"/><rect x="1220" y="122" width="1" height="3" fill="#fff" fill-opacity="0.46"/><rect x="1225" y="124" width="1" height="1" fill="#fff" fill-opacity="0.36"/><rect x="1230" y="124" width="1" height="1" fill="#fff" fill-opacity="0.36"/><rect x="1234" y="124" width="1" height="1" fill="#fff" fill-opacity="0.36"/><rect x="1239" y="122" width="1" height="3" fill="#fff" fill-opacity="0.46"/><rect x="1244" y="124" width="1" height="1" fill="#fff" fill-opacity="0.36"/><rect x="1249" y="124" width="1" height="1" fill="#fff" fill-opacity="0.36"/><rect x="1253" y="124" width="1" height="1" fill="#fff" fill-opacity="0.36"/><rect x="1258" y="119" width="1" height="6" fill="#fff" fill-opacity="0.72"/><rect x="1263" y="124" width="1" height="1" fill="#fff" fill-opacity="0.36"/><rect x="54" y="130" width="1" height="1" fill="#fff" fill-opacity="0.36"/><rect x="52" y="135" width="3" height="1" fill="#fff" fill-opacity="0.46"/><rect x="54" y="139" width="1" height="1" fill="#fff" fill-opacity="0.36"/><rect x="54" y="144" width="1" height="1" fill="#fff" fill-opacity="0.36"/><rect x="54" y="149" width="1" height="1" fill="#fff" fill-opacity="0.36"/><rect x="49" y="153" width="6" height="1" fill="#fff" fill-opacity="0.72"/><rect x="54" y="158" width="1" height="1" fill="#fff" fill-opacity="0.36"/><rect x="54" y="163" width="1" height="1" fill="#fff" fill-opacity="0.36"/><rect x="54" y="168" width="1" height="1" fill="#fff" fill-opacity="0.36"/><rect x="52" y="172" width="3" height="1" fill="#fff" fill-opacity="0.46"/><rect x="54" y="177" width="1" height="1" fill="#fff" fill-opacity="0.36"/><rect x="54" y="182" width="1" height="1" fill="#fff" fill-opacity="0.36"/><rect x="54" y="186" width="1" height="1" fill="#fff" fill-opacity="0.36"/><rect x="52" y="191" width="3" height="1" fill="#fff" fill-opacity="0.46"/><rect x="54" y="196" width="1" height="1" fill="#fff" fill-opacity="0.36"/><rect x="54" y="201" width="1" height="1" fill="#fff" fill-opacity="0.36"/><rect x="54" y="205" width="1" height="1" fill="#fff" fill-opacity="0.36"/><rect x="52" y="210" width="3" height="1" fill="#fff" fill-opacity="0.46"/><rect x="54" y="215" width="1" height="1" fill="#fff" fill-opacity="0.36"/><rect x="54" y="220" width="1" height="1" fill="#fff" fill-opacity="0.36"/><rect x="54" y="224" width="1" height="1" fill="#fff" fill-opacity="0.36"/><rect x="52" y="229" width="3" height="1" fill="#fff" fill-opacity="0.46"/><rect x="54" y="234" width="1" height="1" fill="#fff" fill-opacity="0.36"/><rect x="54" y="238" width="1" height="1" fill="#fff" fill-opacity="0.36"/><rect x="54" y="243" width="1" height="1" fill="#fff" fill-opacity="0.36"/><rect x="49" y="248" width="6" height="1" fill="#fff" fill-opacity="0.72"/><rect x="54" y="253" width="1" height="1" fill="#fff" fill-opacity="0.36"/><rect x="54" y="257" width="1" height="1" fill="#fff" fill-opacity="0.36"/><rect x="54" y="262" width="1" height="1" fill="#fff" fill-opacity="0.36"/><rect x="52" y="267" width="3" height="1" fill="#fff" fill-opacity="0.46"/><rect x="54" y="272" width="1" height="1" fill="#fff" fill-opacity="0.36"/><rect x="54" y="276" width="1" height="1" fill="#fff" fill-opacity="0.36"/><rect x="54" y="281" width="1" height="1" fill="#fff" fill-opacity="0.36"/><rect x="52" y="286" width="3" height="1" fill="#fff" fill-opacity="0.46"/><rect x="54" y="290" width="1" height="1" fill="#fff" fill-opacity="0.36"/><rect x="54" y="295" width="1" height="1" fill="#fff" fill-opacity="0.36"/><rect x="54" y="300" width="1" height="1" fill="#fff" fill-opacity="0.36"/><rect x="52" y="305" width="3" height="1" fill="#fff" fill-opacity="0.46"/><rect x="54" y="309" width="1" height="1" fill="#fff" fill-opacity="0.36"/><rect x="54" y="314" width="1" height="1" fill="#fff" fill-opacity="0.36"/><rect x="54" y="319" width="1" height="1" fill="#fff" fill-opacity="0.36"/><rect x="52" y="323" width="3" height="1" fill="#fff" fill-opacity="0.46"/><rect x="54" y="328" width="1" height="1" fill="#fff" fill-opacity="0.36"/><rect x="54" y="333" width="1" height="1" fill="#fff" fill-opacity="0.36"/><rect x="54" y="338" width="1" height="1" fill="#fff" fill-opacity="0.36"/><rect x="49" y="342" width="6" height="1" fill="#fff" fill-opacity="0.72"/><rect x="54" y="347" width="1" height="1" fill="#fff" fill-opacity="0.36"/><rect x="54" y="352" width="1" height="1" fill="#fff" fill-opacity="0.36"/><rect x="54" y="357" width="1" height="1" fill="#fff" fill-opacity="0.36"/><rect x="52" y="361" width="3" height="1" fill="#fff" fill-opacity="0.46"/><rect x="54" y="366" width="1" height="1" fill="#fff" fill-opacity="0.36"/><rect x="54" y="371" width="1" height="1" fill="#fff" fill-opacity="0.36"/><rect x="54" y="375" width="1" height="1" fill="#fff" fill-opacity="0.36"/><rect x="52" y="380" width="3" height="1" fill="#fff" fill-opacity="0.46"/><rect x="54" y="385" width="1" height="1" fill="#fff" fill-opacity="0.36"/><rect x="54" y="390" width="1" height="1" fill="#fff" fill-opacity="0.36"/><rect x="54" y="394" width="1" height="1" fill="#fff" fill-opacity="0.36"/><rect x="52" y="399" width="3" height="1" fill="#fff" fill-opacity="0.46"/><rect x="54" y="404" width="1" height="1" fill="#fff" fill-opacity="0.36"/><rect x="54" y="409" width="1" height="1" fill="#fff" fill-opacity="0.36"/><rect x="54" y="413" width="1" height="1" fill="#fff" fill-opacity="0.36"/><rect x="52" y="418" width="3" height="1" fill="#fff" fill-opacity="0.46"/><rect x="54" y="423" width="1" height="1" fill="#fff" fill-opacity="0.36"/><rect x="54" y="427" width="1" height="1" fill="#fff" fill-opacity="0.36"/><rect x="54" y="432" width="1" height="1" fill="#fff" fill-opacity="0.36"/><rect x="49" y="437" width="6" height="1" fill="#fff" fill-opacity="0.72"/><rect x="54" y="442" width="1" height="1" fill="#fff" fill-opacity="0.36"/><rect x="54" y="446" width="1" height="1" fill="#fff" fill-opacity="0.36"/><rect x="54" y="451" width="1" height="1" fill="#fff" fill-opacity="0.36"/><rect x="52" y="456" width="3" height="1" fill="#fff" fill-opacity="0.46"/><rect x="54" y="460" width="1" height="1" fill="#fff" fill-opacity="0.36"/><rect x="54" y="465" width="1" height="1" fill="#fff" fill-opacity="0.36"/><rect x="54" y="470" width="1" height="1" fill="#fff" fill-opacity="0.36"/><rect x="52" y="475" width="3" height="1" fill="#fff" fill-opacity="0.46"/><rect x="54" y="479" width="1" height="1" fill="#fff" fill-opacity="0.36"/><rect x="54" y="484" width="1" height="1" fill="#fff" fill-opacity="0.36"/><rect x="54" y="489" width="1" height="1" fill="#fff" fill-opacity="0.36"/><rect x="52" y="494" width="3" height="1" fill="#fff" fill-opacity="0.46"/><rect x="54" y="498" width="1" height="1" fill="#fff" fill-opacity="0.36"/><rect x="54" y="503" width="1" height="1" fill="#fff" fill-opacity="0.36"/><rect x="54" y="508" width="1" height="1" fill="#fff" fill-opacity="0.36"/><rect x="52" y="512" width="3" height="1" fill="#fff" fill-opacity="0.46"/><rect x="54" y="517" width="1" height="1" fill="#fff" fill-opacity="0.36"/><rect x="54" y="522" width="1" height="1" fill="#fff" fill-opacity="0.36"/><rect x="54" y="527" width="1" height="1" fill="#fff" fill-opacity="0.36"/><rect x="49" y="531" width="6" height="1" fill="#fff" fill-opacity="0.72"/><rect x="54" y="536" width="1" height="1" fill="#fff" fill-opacity="0.36"/><rect x="54" y="541" width="1" height="1" fill="#fff" fill-opacity="0.36"/><rect x="54" y="546" width="1" height="1" fill="#fff" fill-opacity="0.36"/><rect x="52" y="550" width="3" height="1" fill="#fff" fill-opacity="0.46"/><rect x="54" y="555" width="1" height="1" fill="#fff" fill-opacity="0.36"/><rect x="54" y="560" width="1" height="1" fill="#fff" fill-opacity="0.36"/><rect x="54" y="564" width="1" height="1" fill="#fff" fill-opacity="0.36"/><rect x="52" y="569" width="3" height="1" fill="#fff" fill-opacity="0.46"/><rect x="54" y="574" width="1" height="1" fill="#fff" fill-opacity="0.36"/><rect x="54" y="579" width="1" height="1" fill="#fff" fill-opacity="0.36"/><rect x="54" y="583" width="1" height="1" fill="#fff" fill-opacity="0.36"/><rect x="52" y="588" width="3" height="1" fill="#fff" fill-opacity="0.46"/><rect x="54" y="593" width="1" height="1" fill="#fff" fill-opacity="0.36"/><rect x="54" y="598" width="1" height="1" fill="#fff" fill-opacity="0.36"/><rect x="54" y="602" width="1" height="1" fill="#fff" fill-opacity="0.36"/><rect x="52" y="607" width="3" height="1" fill="#fff" fill-opacity="0.46"/><rect x="54" y="612" width="1" height="1" fill="#fff" fill-opacity="0.36"/><rect x="54" y="616" width="1" height="1" fill="#fff" fill-opacity="0.36"/><rect x="54" y="621" width="1" height="1" fill="#fff" fill-opacity="0.36"/><rect x="49" y="626" width="6" height="1" fill="#fff" fill-opacity="0.72"/><rect x="54" y="631" width="1" height="1" fill="#fff" fill-opacity="0.36"/><rect x="54" y="635" width="1" height="1" fill="#fff" fill-opacity="0.36"/><rect x="54" y="640" width="1" height="1" fill="#fff" fill-opacity="0.36"/><rect x="52" y="645" width="3" height="1" fill="#fff" fill-opacity="0.46"/><rect x="54" y="649" width="1" height="1" fill="#fff" fill-opacity="0.36"/><rect x="54" y="654" width="1" height="1" fill="#fff" fill-opacity="0.36"/><rect x="54" y="659" width="1" height="1" fill="#fff" fill-opacity="0.36"/><rect x="52" y="664" width="3" height="1" fill="#fff" fill-opacity="0.46"/><rect x="54" y="668" width="1" height="1" fill="#fff" fill-opacity="0.36"/><rect x="54" y="673" width="1" height="1" fill="#fff" fill-opacity="0.36"/><rect x="54" y="678" width="1" height="1" fill="#fff" fill-opacity="0.36"/><rect x="52" y="683" width="3" height="1" fill="#fff" fill-opacity="0.46"/><rect x="54" y="687" width="1" height="1" fill="#fff" fill-opacity="0.36"/><rect x="54" y="692" width="1" height="1" fill="#fff" fill-opacity="0.36"/><rect x="54" y="697" width="1" height="1" fill="#fff" fill-opacity="0.36"/><rect x="52" y="701" width="3" height="1" fill="#fff" fill-opacity="0.46"/><rect x="54" y="706" width="1" height="1" fill="#fff" fill-opacity="0.36"/><rect x="54" y="711" width="1" height="1" fill="#fff" fill-opacity="0.36"/><rect x="54" y="716" width="1" height="1" fill="#fff" fill-opacity="0.36"/><rect x="49" y="720" width="6" height="1" fill="#fff" fill-opacity="0.72"/><rect x="54" y="725" width="1" height="1" fill="#fff" fill-opacity="0.36"/><rect x="54" y="730" width="1" height="1" fill="#fff" fill-opacity="0.36"/><rect x="54" y="735" width="1" height="1" fill="#fff" fill-opacity="0.36"/><rect x="52" y="739" width="3" height="1" fill="#fff" fill-opacity="0.46"/><rect x="54" y="744" width="1" height="1" fill="#fff" fill-opacity="0.36"/><rect x="54" y="749" width="1" height="1" fill="#fff" fill-opacity="0.36"/><rect x="54" y="753" width="1" height="1" fill="#fff" fill-opacity="0.36"/><rect x="52" y="758" width="3" height="1" fill="#fff" fill-opacity="0.46"/><rect x="54" y="763" width="1" height="1" fill="#fff" fill-opacity="0.36"/><rect x="54" y="768" width="1" height="1" fill="#fff" fill-opacity="0.36"/><rect x="54" y="772" width="1" height="1" fill="#fff" fill-opacity="0.36"/><rect x="52" y="777" width="3" height="1" fill="#fff" fill-opacity="0.46"/><rect x="54" y="782" width="1" height="1" fill="#fff" fill-opacity="0.36"/><rect x="54" y="786" width="1" height="1" fill="#fff" fill-opacity="0.36"/><rect x="54" y="791" width="1" height="1" fill="#fff" fill-opacity="0.36"/><rect x="52" y="796" width="3" height="1" fill="#fff" fill-opacity="0.46"/><rect x="54" y="801" width="1" height="1" fill="#fff" fill-opacity="0.36"/><rect x="54" y="805" width="1" height="1" fill="#fff" fill-opacity="0.36"/><rect x="54" y="810" width="1" height="1" fill="#fff" fill-opacity="0.36"/><rect x="49" y="815" width="6" height="1" fill="#fff" fill-opacity="0.72"/><rect x="54" y="820" width="1" height="1" fill="#fff" fill-opacity="0.36"/><rect x="54" y="824" width="1" height="1" fill="#fff" fill-opacity="0.36"/><rect x="54" y="829" width="1" height="1" fill="#fff" fill-opacity="0.36"/><rect x="52" y="834" width="3" height="1" fill="#fff" fill-opacity="0.46"/></svg>
<svg style="left:0;top:0" width="1500" height="872"><g clip-path="url(#rclip)" opacity=".28"><path d="M579.4 133.1C579.7 136.4 580.1 145.9 581.2 152.7C582.2 159.5 583.3 166.6 585.4 174.0C587.5 181.4 590.5 190.3 593.6 197.1C596.7 203.9 599.8 209.6 604.3 214.9C608.7 220.2 614.0 225.4 620.3 229.1C626.5 232.9 633.3 235.4 641.6 237.3C649.9 239.2 661.8 239.9 670.1 240.5C678.4 241.1 682.5 241.3 691.4 240.9C700.3 240.5 712.1 239.1 723.4 238.0C734.7 237.0 747.1 235.5 759.0 234.5C770.8 233.4 783.9 232.5 794.5 231.6C805.2 230.7 825.4 228.8 823.0 229.1C820.6 229.4 781.2 233.2 780.0 233.4C778.8 233.6 804.3 231.5 815.6 230.2C826.8 228.9 839.3 227.8 847.6 225.6C855.9 223.3 859.4 220.8 865.3 216.7C871.3 212.5 876.6 208.7 883.1 200.7C889.6 192.7 896.8 179.2 904.5 168.7C912.2 158.2 921.7 144.0 929.4 137.7C937.1 131.5 942.4 133.7 950.7 131.3C959.0 129.0 969.7 125.9 979.1 123.5C988.6 121.1 998.1 118.9 1007.6 117.1C1017.1 115.3 1026.6 113.7 1036.0 112.8C1045.5 112.0 1057.7 111.4 1064.5 111.8C1071.3 112.2 1074.1 112.7 1076.9 115.3C1079.8 118.0 1081.0 122.7 1081.6 127.8C1082.2 132.8 1081.9 139.0 1080.5 145.6C1079.1 152.1 1076.6 159.5 1073.4 166.9C1070.1 174.3 1065.1 183.5 1060.9 190.0C1056.8 196.5 1051.8 201.9 1048.5 206.0C1045.2 210.2 1043.0 211.4 1041.4 214.9C1039.8 218.5 1038.9 221.1 1038.9 227.4C1038.9 233.6 1040.7 245.1 1041.4 252.2C1042.1 259.4 1043.2 262.9 1043.2 270.0C1043.2 277.1 1042.3 286.6 1041.4 294.9C1040.5 303.2 1038.6 312.7 1037.8 319.8C1037.1 326.9 1036.2 331.1 1036.8 337.6C1037.3 344.1 1039.4 352.7 1041.4 358.9C1043.3 365.2 1046.3 370.2 1048.5 374.9C1050.7 379.7 1053.6 383.8 1054.5 387.4C1055.4 390.9 1055.4 393.6 1053.8 396.3C1052.2 398.9 1049.1 401.9 1044.9 403.4C1040.8 404.9 1034.0 405.0 1028.9 405.2C1023.9 405.3 1019.4 403.5 1014.7 404.1C1010.0 404.7 1004.6 406.8 1000.5 408.7C996.3 410.7 992.8 413.1 989.8 415.8C986.9 418.5 986.3 420.4 982.7 424.9C979.1 429.4 973.2 437.6 968.5 442.7C963.7 447.7 960.2 452.2 954.3 455.1C948.3 458.1 940.0 459.6 932.9 460.5C925.8 461.3 918.1 461.2 911.6 460.5C905.1 459.7 899.1 456.9 893.8 455.8C888.5 454.8 884.6 453.6 879.6 454.1C874.5 454.5 868.0 456.1 863.6 458.7C859.1 461.2 855.6 465.2 852.9 469.3C850.2 473.5 849.0 476.2 847.6 483.6C846.1 491.0 845.2 504.0 844.0 513.8C842.8 523.6 841.2 534.5 840.5 542.2C839.7 550.0 839.4 554.1 839.7 560.0C840.0 566.0 840.6 571.9 842.2 577.8C843.8 583.7 846.1 590.3 849.3 595.6C852.6 600.9 857.9 605.4 861.8 609.8C865.6 614.3 869.8 617.8 872.5 622.3C875.1 626.7 877.1 631.4 877.8 636.5C878.5 641.5 877.6 648.2 876.7 652.5C875.8 656.8 874.7 660.4 872.5 662.4C870.3 664.5 867.7 664.6 863.6 664.9C859.4 665.2 852.6 663.6 847.6 664.2C842.5 664.8 836.9 666.0 833.3 668.5C829.8 671.0 827.9 674.7 826.2 679.2C824.6 683.6 823.8 689.5 823.4 695.2C823.0 700.9 824.1 707.8 824.0 713.3C823.9 718.9 823.9 724.4 822.7 728.3C821.4 732.2 819.1 734.7 816.7 736.7C814.3 738.6 811.7 739.7 808.3 740.0C805.0 740.3 802.2 739.3 796.7 738.3C791.1 737.4 780.7 734.5 775.0 734.3C769.3 734.0 768.1 734.7 762.5 737.1C756.9 739.5 748.3 744.5 741.2 748.5C734.1 752.4 726.4 756.8 719.8 760.9C713.3 765.1 708.0 768.3 702.1 773.4C696.1 778.4 690.2 785.2 684.3 791.2C678.4 797.1 672.4 803.0 666.5 808.9C660.6 814.9 654.1 822.0 648.7 826.7C643.4 831.5 638.6 834.4 634.5 837.4C630.3 840.3 625.6 843.3 623.8 844.5" fill="none" stroke="#f0d840" stroke-width="2.0" stroke-linecap="round" stroke-linejoin="round"/><path d="M1100.1 497.8C1098.3 498.7 1092.6 500.5 1089.4 503.1C1086.1 505.8 1083.2 509.1 1080.5 513.8C1077.8 518.5 1075.2 525.1 1073.4 531.6C1071.6 538.1 1070.8 545.2 1069.8 552.9C1068.8 560.6 1067.9 570.1 1067.3 577.8C1066.7 585.5 1066.4 592.1 1066.3 599.1C1066.2 606.2 1066.3 612.1 1066.7 620.0C1067.1 627.9 1067.8 638.3 1068.7 646.7C1069.5 655.0 1070.4 662.8 1071.7 670.0C1072.9 677.2 1074.3 683.9 1076.0 690.0C1077.7 696.1 1079.6 700.8 1081.7 706.7C1083.7 712.5 1087.2 721.9 1088.3 725.0" fill="none" stroke="#f0d840" stroke-width="2.0" stroke-linecap="round" stroke-linejoin="round"/></g><defs><clipPath id="rclip"><rect x="55" y="109" width="1209" height="16"/></clipPath></defs><rect x="212.7" y="125" width="1.5" height="712" fill="#5b9ce9"/><rect x="1101.3" y="125" width="1.6" height="712" fill="#6aa5eb"/><rect x="213" y="111" width="889.5" height="1" fill="#5b6c84"/><rect x="212.7" y="111" width="1.5" height="14" fill="#52657e"/><rect x="1101.3" y="111" width="1.6" height="14" fill="#52657e"/><circle cx="213.4" cy="496.8" r="2.6" fill="#fff" stroke="#8fbcf0" stroke-width="1.3"/><circle cx="1102.1" cy="496.8" r="2.6" fill="#fff" stroke="#8fbcf0" stroke-width="1.3"/><circle cx="213.5" cy="111.7" r="2.3" fill="none" stroke="#566a86" stroke-width="1"/><circle cx="658" cy="111.7" r="2.3" fill="none" stroke="#566a86" stroke-width="1"/><circle cx="1102" cy="111.7" r="2.3" fill="none" stroke="#566a86" stroke-width="1"/></svg>
<span class="t" style="left:121.3px;top:108.25px;font-size:7.5px;line-height:11.5px;color:#d2d2d2;transform:scaleX(0.9590);">500</span>
<span class="t" style="left:215.57px;top:108.25px;font-size:7.5px;line-height:11.5px;color:#d2d2d2;transform:scaleX(0.9590);">600</span>
<span class="t" style="left:309.84px;top:108.25px;font-size:7.5px;line-height:11.5px;color:#d2d2d2;transform:scaleX(0.9590);">700</span>
<span class="t" style="left:404.11px;top:108.25px;font-size:7.5px;line-height:11.5px;color:#d2d2d2;transform:scaleX(0.9590);">800</span>
<span class="t" style="left:498.38px;top:108.25px;font-size:7.5px;line-height:11.5px;color:#d2d2d2;transform:scaleX(0.9590);">900</span>
<span class="t" style="left:590.65px;top:108.25px;font-size:7.5px;line-height:11.5px;color:#d2d2d2;transform:scaleX(0.9590);">1000</span>
<span class="t" style="left:684.92px;top:108.25px;font-size:7.5px;line-height:11.5px;color:#d2d2d2;transform:scaleX(0.9921);">1100</span>
<span class="t" style="left:779.1899999999999px;top:108.25px;font-size:7.5px;line-height:11.5px;color:#d2d2d2;transform:scaleX(0.9590);">1200</span>
<span class="t" style="left:873.4599999999999px;top:108.25px;font-size:7.5px;line-height:11.5px;color:#d2d2d2;transform:scaleX(0.9590);">1300</span>
<span class="t" style="left:967.7299999999999px;top:108.25px;font-size:7.5px;line-height:11.5px;color:#d2d2d2;transform:scaleX(0.9590);">1400</span>
<span class="t" style="left:1062.0px;top:108.25px;font-size:7.5px;line-height:11.5px;color:#d2d2d2;transform:scaleX(0.9590);">1500</span>
<span class="t" style="left:1156.27px;top:108.25px;font-size:7.5px;line-height:11.5px;color:#d2d2d2;transform:scaleX(0.9590);">1600</span>
<div style="left:1250.54px;top:109px;width:12.5px;height:12px;overflow:hidden"><span class="t" style="left:0;top:0;font-size:7.5px;line-height:10px;color:#d2d2d2;transform:scaleX(0.959)">1700</span></div>
<span class="t" style="left:38.5px;top:148.9px;font-size:7.5px;line-height:10px;color:#d2d2d2;transform-origin:50% 50%;transform:rotate(-90deg) scaleX(0.959);width:12.51px;margin-left:-0.26px">300</span>
<span class="t" style="left:38.5px;top:243.4px;font-size:7.5px;line-height:10px;color:#d2d2d2;transform-origin:50% 50%;transform:rotate(-90deg) scaleX(0.959);width:12.51px;margin-left:-0.26px">400</span>
<span class="t" style="left:38.5px;top:337.9px;font-size:7.5px;line-height:10px;color:#d2d2d2;transform-origin:50% 50%;transform:rotate(-90deg) scaleX(0.959);width:12.51px;margin-left:-0.26px">500</span>
<span class="t" style="left:38.5px;top:432.4px;font-size:7.5px;line-height:10px;color:#d2d2d2;transform-origin:50% 50%;transform:rotate(-90deg) scaleX(0.959);width:12.51px;margin-left:-0.26px">600</span>
<span class="t" style="left:38.5px;top:526.9px;font-size:7.5px;line-height:10px;color:#d2d2d2;transform-origin:50% 50%;transform:rotate(-90deg) scaleX(0.959);width:12.51px;margin-left:-0.26px">700</span>
<span class="t" style="left:38.5px;top:621.4px;font-size:7.5px;line-height:10px;color:#d2d2d2;transform-origin:50% 50%;transform:rotate(-90deg) scaleX(0.959);width:12.51px;margin-left:-0.26px">800</span>
<span class="t" style="left:38.5px;top:715.8px;font-size:7.5px;line-height:10px;color:#d2d2d2;transform-origin:50% 50%;transform:rotate(-90deg) scaleX(0.959);width:12.51px;margin-left:-0.26px">900</span>
<span class="t" style="left:36.5px;top:810.3px;font-size:7.5px;line-height:10px;color:#d2d2d2;transform-origin:50% 50%;transform:rotate(-90deg) scaleX(0.959);width:16.68px;margin-left:-0.34px">1000</span>
<span class="t" style="left:41px;top:111.25px;font-size:7.5px;line-height:11.5px;color:#bdbdbd;transform:scaleX(0.8803);">mm</span>
<div style="left:38px;top:109px;width:1px;height:728px;background:#505050;"></div>
<div style="left:170px;top:109px;width:1px;height:16px;background:#2f8fe8;"></div>
<div style="left:38px;top:318px;width:17px;height:1px;background:#2f8fe8;"></div>
<div style="left:1269px;top:365.3px;width:5.3px;height:157.4px;background:#6f6f6f;border-radius:2.6px"></div>
<div style="left:496.5px;top:842.5px;width:285.5px;height:5px;background:#6f6f6f;border-radius:2.5px"></div>
<svg style="left:1264px;top:109px;" width="14" height="743" viewBox="0 0 14 743"><path d="M4.5 10 L7.25 4 L10 10Z" fill="#8a8a8a"/><path d="M4.4 718.7 L9.9 718.7 L7.15 724.2Z" fill="#8a8a8a"/></svg>
<svg style="left:38px;top:837px;" width="1240" height="15" viewBox="0 0 1240 15"><path d="M11.1 4.7 L11.1 10.9 L5.4 7.8Z" fill="#8a8a8a"/><path d="M1215.8 5.2 L1215.8 10.8 L1221.3 8Z" fill="#8a8a8a"/></svg>
<svg style="left:10.8px;top:4px;" width="15.7" height="15.7" viewBox="0 0 19.4 19.4"><defs><linearGradient id="ga" x1="0" y1="0" x2="0" y2="1"><stop offset="0" stop-color="#52d2fd"/><stop offset="1" stop-color="#2ea6ee"/></linearGradient><clipPath id="gac"><rect x="0" y="0" width="19.4" height="19.4" rx="2"/></clipPath></defs><g clip-path="url(#gac)"><rect width="19.4" height="19.4" fill="#1762bb"/><polygon points="10.4,0 19.4,0 19.4,19.4 0,19.4 0,14" fill="url(#ga)"/><path d="M9.6 1.8 L3.6 13.2 L7.2 19.4" fill="none" stroke="#1762bb" stroke-width="1" opacity=".6"/><path d="M6 13.4 H19.4" stroke="#1762bb" stroke-width=".9" opacity=".45"/><path d="M7.6 13.2 L11.4 5.6" stroke="#1762bb" stroke-width=".8" opacity=".35"/></g></svg>
<span class="t" style="left:46.9px;top:7.00px;font-size:10.6px;line-height:14.6px;color:#ececec;transform:scaleX(0.8461);">File</span>
<span class="t" style="left:82.7px;top:7.00px;font-size:10.6px;line-height:14.6px;color:#ececec;transform:scaleX(0.8901);">Edit</span>
<span class="t" style="left:119.3px;top:7.00px;font-size:10.6px;line-height:14.6px;color:#ececec;transform:scaleX(0.8982);">Text</span>
<span class="t" style="left:157.7px;top:7.00px;font-size:10.6px;line-height:14.6px;color:#ececec;transform:scaleX(0.8440);">Layer</span>
<span class="t" style="left:200.5px;top:7.00px;font-size:10.6px;line-height:14.6px;color:#ececec;transform:scaleX(0.8891);">Select</span>
<span class="t" style="left:246.7px;top:7.00px;font-size:10.6px;line-height:14.6px;color:#ececec;transform:scaleX(0.9206);">View</span>
<span class="t" style="left:288.1px;top:7.00px;font-size:10.6px;line-height:14.6px;color:#ececec;transform:scaleX(0.9477);">Window</span>
<span class="t" style="left:344.6px;top:7.00px;font-size:10.6px;line-height:14.6px;color:#ececec;transform:scaleX(0.9299);">Help</span>
<svg style="left:1430px;top:0px;" width="70" height="27" viewBox="0 0 70 27"><rect x="7" y="12.8" width="7.4" height="2.4" fill="#eee"/><rect x="32.6" y="8.3" width="5" height="4.6" fill="none" stroke="#e4e4e4" stroke-width="1.3"/><rect x="30.6" y="10.6" width="5.4" height="4.6" fill="#272727" stroke="#e4e4e4" stroke-width="1.4"/><path d="M54.3 8.2 L61.5 15 M61.5 8.2 L54.3 15" stroke="#eee" stroke-width="1.4"/></svg>
<div style="left:17.2px;top:31px;width:26.6px;height:26.6px;background:#282828;border-radius:2.5px;"></div>
<svg style="left:21px;top:34.8px;" width="19.4" height="19.4" viewBox="0 0 19.4 19.4"><defs><linearGradient id="gb" x1="0" y1="0" x2="0" y2="1"><stop offset="0" stop-color="#52d2fd"/><stop offset="1" stop-color="#2ea6ee"/></linearGradient><clipPath id="gbc"><rect x="0" y="0" width="19.4" height="19.4" rx="2"/></clipPath></defs><g clip-path="url(#gbc)"><rect width="19.4" height="19.4" fill="#1762bb"/><polygon points="10.4,0 19.4,0 19.4,19.4 0,19.4 0,14" fill="url(#gb)"/><path d="M9.6 1.8 L3.6 13.2 L7.2 19.4" fill="none" stroke="#1762bb" stroke-width="1" opacity=".6"/><path d="M6 13.4 H19.4" stroke="#1762bb" stroke-width=".9" opacity=".45"/><path d="M7.6 13.2 L11.4 5.6" stroke="#1762bb" stroke-width=".8" opacity=".35"/></g></svg>
<div style="left:48px;top:31px;width:1px;height:27px;background:#292929;"></div>
<div style="left:85px;top:31px;width:1px;height:27px;background:#292929;"></div>
<svg style="left:58px;top:35px;" width="20" height="20" viewBox="0 0 20 20"><rect x=".8" y="1.2" width="5.2" height="5" fill="#bf7482"/><rect x="7" y="2" width="4.6" height="4.4" fill="#9b9b9b"/><rect x="1.8" y="7.8" width="4.2" height="4.4" fill="#9b9b9b"/><rect x="7" y="7.8" width="4.6" height="4.4" fill="#d3aa7c"/><rect x="12.8" y="7.8" width="4.4" height="4.4" fill="#9b9b9b"/><rect x="7" y="13.6" width="4.6" height="4.4" fill="#9b9b9b"/><rect x="12.8" y="13.6" width="3.6" height="3.6" fill="#e0cb8e"/></svg>
<svg style="left:94px;top:35px;" width="20" height="20" viewBox="0 0 20 20"><path d="M7.5 2 H4 Q1.8 2 1.8 4.2 V15 Q1.8 17 4 17 H14.6 Q16.8 17 16.8 15 V11" fill="none" stroke="#a4a4dc" stroke-width="1.5"/><rect x="4.2" y="4.8" width="4.6" height="9.6" fill="#a2a2a2"/><rect x="10" y="10.2" width="4.4" height="4.2" fill="#a2a2a2"/><path d="M11.2 8.2 L16.6 2.6 M12.4 2.2 H17 V6.8" fill="none" stroke="#5fae98" stroke-width="1.5"/></svg>
<div style="left:193.2px;top:34px;width:27px;height:20.8px;background:#424242;border-radius:2px;"></div>
<div style="left:221.4px;top:34px;width:27px;height:20.8px;background:#424242;border-radius:2px;"></div>
<svg style="left:0px;top:0px;" width="1500" height="62" viewBox="0 0 1500 62"><path d="M205.60 37.17 L207.60 37.17 L208.00 38.77 L209.73 39.48 L211.15 38.64 L212.56 40.05 L211.72 41.47 L212.43 43.20 L214.03 43.60 L214.03 45.60 L212.43 46.00 L211.72 47.73 L212.56 49.15 L211.15 50.56 L209.73 49.72 L208.00 50.43 L207.60 52.03 L205.60 52.03 L205.20 50.43 L203.47 49.72 L202.05 50.56 L200.64 49.15 L201.48 47.73 L200.77 46.00 L199.17 45.60 L199.17 43.60 L200.77 43.20 L201.48 41.47 L200.64 40.05 L202.05 38.64 L203.47 39.48 L205.20 38.77Z M211.29999999999998 44.6 A4.7 4.7 0 1 0 201.9 44.6 A4.7 4.7 0 1 0 211.29999999999998 44.6Z" fill="#a2a2a2" fill-rule="evenodd" stroke="#a2a2a2" stroke-width=".6" stroke-linejoin="round"/><circle cx="206.6" cy="44.6" r="2.5" fill="none" stroke="#3ed47c" stroke-width="2.2"/><path d="M233.70 37.17 L235.70 37.17 L236.10 38.77 L237.83 39.48 L239.25 38.64 L240.66 40.05 L239.82 41.47 L240.53 43.20 L242.13 43.60 L242.13 45.60 L240.53 46.00 L239.82 47.73 L240.66 49.15 L239.25 50.56 L237.83 49.72 L236.10 50.43 L235.70 52.03 L233.70 52.03 L233.30 50.43 L231.57 49.72 L230.15 50.56 L228.74 49.15 L229.58 47.73 L228.87 46.00 L227.27 45.60 L227.27 43.60 L228.87 43.20 L229.58 41.47 L228.74 40.05 L230.15 38.64 L231.57 39.48 L233.30 38.77Z M239.39999999999998 44.6 A4.7 4.7 0 1 0 230.0 44.6 A4.7 4.7 0 1 0 239.39999999999998 44.6Z" fill="#a2a2a2" fill-rule="evenodd" stroke="#a2a2a2" stroke-width=".6" stroke-linejoin="round"/><path d="M232.2 46.8 L237.4 42.3" stroke="#e8283e" stroke-width="2.1" stroke-linecap="round"/></svg>
<div style="left:316.4px;top:34px;width:27px;height:20.8px;background:#424242;border-radius:2px;"></div>
<div style="left:344.8px;top:34px;width:27px;height:20.8px;background:#424242;border-radius:2px;"></div>
<div style="left:373.1px;top:34px;width:27px;height:20.8px;background:#424242;border-radius:2px;"></div>
<svg style="left:0px;top:0px;" width="1500" height="62" viewBox="0 0 1500 62"><path d="M323.2 39.8 V38 H325.0Z" fill="#e8e8e8" stroke="none"/><path d="M337.4 39.8 V38 H335.59999999999997Z" fill="#e8e8e8" stroke="none"/><path d="M323.2 50.2 V52 H325.0Z" fill="#e8e8e8" stroke="none"/><path d="M337.4 50.2 V52 H335.59999999999997Z" fill="#e8e8e8" stroke="none"/><rect x="326.00" y="40.10" width="1.9" height="1.9" fill="#8c8c8c"/><rect x="326.00" y="42.55" width="1.9" height="1.9" fill="#8c8c8c"/><rect x="326.00" y="45.00" width="1.9" height="1.9" fill="#8c8c8c"/><rect x="326.00" y="47.45" width="1.9" height="1.9" fill="#8c8c8c"/><rect x="328.45" y="40.10" width="1.9" height="1.9" fill="#8c8c8c"/><rect x="328.45" y="42.55" width="1.9" height="1.9" fill="#d6ee22"/><rect x="328.45" y="45.00" width="1.9" height="1.9" fill="#d6ee22"/><rect x="328.45" y="47.45" width="1.9" height="1.9" fill="#8c8c8c"/><rect x="330.90" y="40.10" width="1.9" height="1.9" fill="#8c8c8c"/><rect x="330.90" y="42.55" width="1.9" height="1.9" fill="#d6ee22"/><rect x="330.90" y="45.00" width="1.9" height="1.9" fill="#d6ee22"/><rect x="330.90" y="47.45" width="1.9" height="1.9" fill="#8c8c8c"/><rect x="333.35" y="40.10" width="1.9" height="1.9" fill="#8c8c8c"/><rect x="333.35" y="42.55" width="1.9" height="1.9" fill="#8c8c8c"/><rect x="333.35" y="45.00" width="1.9" height="1.9" fill="#8c8c8c"/><rect x="333.35" y="47.45" width="1.9" height="1.9" fill="#8c8c8c"/><path d="M351.8 39.8 V38 H353.6Z" fill="#e8e8e8" stroke="none"/><path d="M366 39.8 V38 H364.2Z" fill="#e8e8e8" stroke="none"/><path d="M351.8 50.2 V52 H353.6Z" fill="#e8e8e8" stroke="none"/><path d="M366 50.2 V52 H364.2Z" fill="#e8e8e8" stroke="none"/><rect x="353.60" y="39.40" width="2.2" height="2.2" fill="#a8c228"/><rect x="353.60" y="42.10" width="2.2" height="2.2" fill="#a8c228"/><rect x="353.60" y="44.80" width="2.2" height="2.2" fill="#a8c228"/><rect x="353.60" y="47.50" width="2.2" height="2.2" fill="#a8c228"/><rect x="356.30" y="39.40" width="2.2" height="2.2" fill="#a8c228"/><rect x="356.30" y="42.10" width="2.2" height="2.2" fill="#a8c228"/><rect x="356.30" y="44.80" width="2.2" height="2.2" fill="#a8c228"/><rect x="356.30" y="47.50" width="2.2" height="2.2" fill="#a8c228"/><rect x="359.00" y="39.40" width="2.2" height="2.2" fill="#a8c228"/><rect x="359.00" y="42.10" width="2.2" height="2.2" fill="#a8c228"/><rect x="359.00" y="44.80" width="2.2" height="2.2" fill="#a8c228"/><rect x="359.00" y="47.50" width="2.2" height="2.2" fill="#a8c228"/><rect x="361.70" y="39.40" width="2.2" height="2.2" fill="#a8c228"/><rect x="361.70" y="42.10" width="2.2" height="2.2" fill="#a8c228"/><rect x="361.70" y="44.80" width="2.2" height="2.2" fill="#a8c228"/><rect x="361.70" y="47.50" width="2.2" height="2.2" fill="#a8c228"/><path d="M353 39 H364.4 M353 41.8 H364.4 M353 44.5 H364.4 M353 47.2 H364.4 M353 50 H364.4" stroke="#8a8a8a" stroke-width=".4" stroke-dasharray="1 1"/><path d="M380.2 39.8 V38 H382.0Z" fill="#e8e8e8" stroke="none"/><path d="M394.4 39.8 V38 H392.59999999999997Z" fill="#e8e8e8" stroke="none"/><path d="M380.2 50.2 V52 H382.0Z" fill="#e8e8e8" stroke="none"/><path d="M394.4 50.2 V52 H392.59999999999997Z" fill="#e8e8e8" stroke="none"/><rect x="382.3" y="42.2" width="6.6" height="6.6" fill="none" stroke="#a4b622" stroke-width="1.1"/><circle cx="389" cy="42.8" r="3.3" fill="none" stroke="#a4b622" stroke-width="1.1"/></svg>
<div style="left:469px;top:34px;width:27px;height:20.8px;background:#424242;border-radius:2px;"></div>
<div style="left:497.2px;top:34px;width:27px;height:20.8px;background:#424242;border-radius:2px;"></div>
<div style="left:525.5px;top:34px;width:27px;height:20.8px;background:#424242;border-radius:2px;"></div>
<div style="left:553.8px;top:34px;width:27px;height:20.8px;background:#424242;border-radius:2px;"></div>
<svg style="left:0px;top:0px;" width="1500" height="62" viewBox="0 0 1500 62"><rect x="478.4" y="40.2" width="8.4" height="8.4" fill="#ff6c50"/><rect x="476" y="38" width="5.2" height="4.8" fill="#a0a0a0" stroke="#424242" stroke-width=".5"/><rect x="484" y="46" width="5.2" height="5" fill="#a0a0a0" stroke="#424242" stroke-width=".5"/><rect x="509.2" y="42.8" width="8" height="8.2" fill="#ff6c50"/><rect x="504.2" y="38" width="9" height="9" fill="#a0a0a0" stroke="#424242" stroke-width=".5"/><rect x="532.4" y="38" width="8.4" height="7.8" fill="#a0a0a0"/><rect x="536.8" y="42" width="9" height="9" fill="#ff6c50" stroke="#424242" stroke-width=".5"/><rect x="560.8" y="38" width="5.2" height="4.8" fill="#a0a0a0"/><rect x="569" y="46" width="5" height="5" fill="#a0a0a0"/><rect x="563" y="40.2" width="8.4" height="8.4" fill="#ff6c50" stroke="#424242" stroke-width=".5"/></svg>
<div style="left:649px;top:34px;width:27px;height:20.8px;background:#424242;border-radius:2px;"></div>
<div style="left:677.2px;top:34px;width:27px;height:20.8px;background:#424242;border-radius:2px;"></div>
<div style="left:705.6px;top:34px;width:27px;height:20.8px;background:#424242;border-radius:2px;"></div>
<div style="left:734px;top:34px;width:27px;height:20.8px;background:#424242;border-radius:2px;"></div>
<svg style="left:0px;top:0px;" width="1500" height="62" viewBox="0 0 1500 62"><polygon points="661.6,39 661.6,51 655.6,51" fill="#2f97c4"/><polygon points="663,39 663,51 669.2,51" fill="#a0a0a0"/><polygon points="697,37.6 697,43.8 685.6,43.8" fill="#2f97c4"/><polygon points="697,45 697,51.2 685.6,45" fill="#a0a0a0"/><rect x="712.4" y="38" width="5.6" height="13" fill="#2f97c4"/><rect x="719" y="45.6" width="5.8" height="5.4" fill="#a0a0a0"/><path d="M720.6 40.6 H722.6 Q723.6 40.6 723.6 41.8 V44" fill="none" stroke="#ddd" stroke-width="1"/><path d="M721.2 39 L719.4 40.6 L721.2 42.2Z" fill="#ddd"/><rect x="740.8" y="38" width="5.2" height="13" fill="#2f97c4"/><rect x="747" y="38" width="5.8" height="5.2" fill="#a0a0a0"/><path d="M751.8 44.4 V46.8 Q751.8 47.8 750.6 47.8 H749.4" fill="none" stroke="#ddd" stroke-width="1"/><circle cx="748.8" cy="47.9" r="1.1" fill="#ddd"/></svg>
<div style="left:829px;top:34px;width:27px;height:20.8px;background:#424242;border-radius:2px;"></div>
<svg style="left:0px;top:0px;" width="1500" height="62" viewBox="0 0 1500 62"><rect x="836.6" y="38" width="1.1" height="12.8" fill="#9a9a9a"/><rect x="838.8" y="40.4" width="9.2" height="3" rx=".8" fill="#2d9ad2"/><rect x="838.8" y="45.4" width="6" height="3" rx=".8" fill="#2d9ad2"/></svg>
<div style="left:924px;top:34px;width:27px;height:20.8px;background:#424242;border-radius:2px;"></div>
<div style="left:952.3px;top:34px;width:27.4px;height:20.8px;background:#282828;border-radius:2px;"></div>
<div style="left:980.4px;top:34px;width:27.6px;height:20.8px;background:#424242;border-radius:2px;"></div>
<div style="left:1009px;top:34px;width:10px;height:20.8px;background:#424242;border-radius:2px;"></div>
<svg style="left:0px;top:0px;" width="1500" height="62" viewBox="0 0 1500 62"><path d="M934.4 37 V50.2 M931.8 47.4 H945.2" stroke="#e6e6e6" stroke-width="1.1"/><rect x="936" y="39" width="3.2" height="3.2" fill="#9c9c9c"/><rect x="940.3" y="39" width="3.2" height="3.2" fill="#9c9c9c"/><rect x="936" y="43.1" width="3.2" height="3.2" fill="#e6283c"/><rect x="940.3" y="43.1" width="3.2" height="3.2" fill="#9c9c9c"/><rect x="959.4" y="41.4" width="6" height="6" fill="#3a3a3a"/><rect x="967.4" y="41.4" width="5.6" height="6" fill="#3a3a3a"/><path d="M966 42.5 L969 44.4 L966 46.3Z" fill="#282828"/><g transform="translate(994.6,44.2) rotate(40)"><path d="M-4.4 3.6 V-0.8 A4.4 4.4 0 0 1 4.4 -0.8 V3.6" fill="none" stroke="#e8283e" stroke-width="2.6"/><rect x="-5.7" y="3.2" width="2.6" height="2" fill="#e8e8e8"/><rect x="3.1" y="3.2" width="2.6" height="2" fill="#e8e8e8"/></g><path d="M1011.4 43 L1014 45.6 L1016.6 43" fill="none" stroke="#e0e0e0" stroke-width="1.3"/></svg>
<div style="left:1088px;top:34px;width:27px;height:20.8px;background:#424242;border-radius:2px;"></div>
<div style="left:1116.2px;top:34px;width:27px;height:20.8px;background:#424242;border-radius:2px;"></div>
<div style="left:1144.5px;top:34px;width:27px;height:20.8px;background:#424242;border-radius:2px;"></div>
<div style="left:1172.8px;top:34px;width:27px;height:20.8px;background:#424242;border-radius:2px;"></div>
<div style="left:1201px;top:34px;width:27px;height:20.8px;background:#424242;border-radius:2px;"></div>
<svg style="left:0px;top:0px;" width="1500" height="62" viewBox="0 0 1500 62"><rect x="1095" y="38.2" width="8.6" height="8.6" fill="#2f97c4"/><circle cx="1104.5" cy="47.3" r="4.4" fill="#2f97c4" stroke="#424242" stroke-width=".6"/><path d="M1102 47.3 H1107 M1104.5 44.8 V49.8" stroke="#2c2c2c" stroke-width="1.1"/><rect x="1123.0" y="38.2" width="8.8" height="8.4" fill="#4b4b4b"/><circle cx="1132.6000000000001" cy="47.3" r="4.2" fill="#4b4b4b" stroke="#444" stroke-width=".5"/><rect x="1151.3" y="38.2" width="8.8" height="8.4" fill="#4b4b4b"/><circle cx="1160.9" cy="47.3" r="4.2" fill="#4b4b4b" stroke="#444" stroke-width=".5"/><rect x="1179.6" y="38.2" width="8.8" height="8.4" fill="#4b4b4b"/><circle cx="1189.2" cy="47.3" r="4.2" fill="#4b4b4b" stroke="#444" stroke-width=".5"/><rect x="1207.8" y="38.2" width="8.8" height="8.4" fill="#4b4b4b"/><circle cx="1217.4" cy="47.3" r="4.2" fill="#4b4b4b" stroke="#444" stroke-width=".5"/></svg>
<div style="left:1296px;top:34px;width:27px;height:20.8px;background:#424242;border-radius:2px;"></div>
<div style="left:1324.3px;top:34px;width:27px;height:20.8px;background:#424242;border-radius:2px;"></div>
<div style="left:1352.6px;top:34px;width:27px;height:20.8px;background:#424242;border-radius:2px;"></div>
<svg style="left:0px;top:0px;" width="1500" height="62" viewBox="0 0 1500 62"><rect x="1307" y="42" width="9" height="9" fill="#2cc8a8"/><circle cx="1307.7" cy="43.3" r="5.6" fill="#a0a0a0" stroke="#424242" stroke-width=".6"/><circle cx="1336.9" cy="43.3" r="5.6" fill="#a0a0a0"/><rect x="1336.2" y="42" width="9" height="9" fill="#2cc8a8" stroke="#424242" stroke-width=".6"/><defs><clipPath id="cin"><circle cx="1366" cy="44.3" r="6.3"/></clipPath></defs><circle cx="1366" cy="44.3" r="6.3" fill="#a0a0a0"/><rect x="1366" y="44.3" width="8" height="8" fill="#2cc8a8" stroke="#424242" stroke-width=".6" clip-path="url(#cin)"/></svg>
<div style="left:1447.8px;top:34px;width:27.2px;height:20.8px;background:#424242;border-radius:2px;"></div>
<svg style="left:0px;top:0px;" width="1500" height="62" viewBox="0 0 1500 62"><circle cx="1461.3" cy="42" r="3.4" fill="none" stroke="#3fd08e" stroke-width="1.3"/><path d="M1454.4 51.6 Q1455.6 45.8 1461.3 45.8 Q1467 45.8 1468.3 51.6" fill="none" stroke="#3fd08e" stroke-width="1.3"/></svg>
<span class="t" style="left:8px;top:68.10px;font-size:9.8px;line-height:13.8px;color:#dedede;transform:scaleX(0.9787);">roads (Group)</span>
<div style="left:75.5px;top:66px;width:1px;height:17px;background:#272727;"></div>
<span class="t" style="left:80.8px;top:68.10px;font-size:9.8px;line-height:13.8px;color:#dedede;transform:scaleX(0.9101);">Fill:</span>
<div style="left:102.4px;top:66.4px;width:32.4px;height:15.6px;background:#000;border-radius:2px;"></div>
<div style="left:141.5px;top:66px;width:1px;height:17px;background:#272727;"></div>
<span class="t" style="left:147px;top:68.10px;font-size:9.8px;line-height:13.8px;color:#dedede;transform:scaleX(0.9389);">Stroke:</span>
<div style="left:184px;top:66.4px;width:32px;height:15.6px;background:#454545;border-radius:2px;"></div>
<div style="left:223px;top:66.4px;width:128.6px;height:15.6px;background:#3d3d3d;border-radius:2px;"></div>
<div style="left:229px;top:74.1px;width:84px;height:1.1px;background:#d8d8d8;"></div>
<span class="t" style="left:319.4px;top:68.10px;font-size:9.8px;line-height:13.8px;color:#dedede;transform:scaleX(1.0084);">0,3 pt</span>
<div style="left:358.5px;top:66px;width:1px;height:17px;background:#272727;"></div>
<div style="left:364px;top:67.2px;width:63.6px;height:15px;background:#434343;border-radius:2px;"></div>
<span class="t" style="left:377px;top:68.40px;font-size:9.8px;line-height:13.8px;color:#e2e2e2;transform:scaleX(1.0160);">Ungroup</span>
<div style="left:432.5px;top:66px;width:1px;height:17px;background:#272727;"></div>
<div style="left:439px;top:70.6px;width:9.4px;height:9.2px;background:#222;border-radius:1.5px;"></div>
<svg style="left:439px;top:70.6px;" width="10" height="10" viewBox="0 0 10 10"><path d="M2.2 4.8 L4 6.6 L7.4 2.6" fill="none" stroke="#e8e8e8" stroke-width="1.1"/></svg>
<span class="t" style="left:453px;top:69.20px;font-size:9.4px;line-height:13.4px;color:#a4a4a4;transform:scaleX(0.9414);">Auto-select:</span>
<div style="left:507px;top:67.4px;width:62px;height:14px;background:#3d3d3d;border-radius:2px;"></div>
<span class="t" style="left:510.3px;top:69.20px;font-size:9.4px;line-height:13.4px;color:#e0e0e0;transform:scaleX(0.9325);">Default</span>
<svg style="left:558px;top:70px;" width="10" height="10" viewBox="0 0 10 10"><path d="M2.6 3.6 L5 6 L7.4 3.6" fill="none" stroke="#d8d8d8" stroke-width="1.2"/></svg>
<div style="left:574.5px;top:66px;width:1px;height:17px;background:#272727;"></div>
<div style="left:583.4px;top:67px;width:20.6px;height:14.6px;background:#3f3f3f;border-radius:2px;"></div>
<div style="left:605.3px;top:67px;width:20.6px;height:14.6px;background:#3f3f3f;border-radius:2px;"></div>
<div style="left:627.2px;top:67px;width:20.6px;height:14.6px;background:#3f3f3f;border-radius:2px;"></div>
<div style="left:649.1px;top:67px;width:20.6px;height:14.6px;background:#3f3f3f;border-radius:2px;"></div>
<svg style="left:0px;top:0px;" width="1500" height="88" viewBox="0 0 1500 88"><circle cx="593.7" cy="73.8" r="4.7" fill="none" stroke="#d0d0d0" stroke-width="1"/><path d="M593.7 67.4 V80.2 M587.3 73.8 H600.1" stroke="#d0d0d0" stroke-width="1"/><rect x="609.7" y="68.8" width="11.899999999999977" height="11.200000000000003" fill="none" stroke="#d0d0d0" stroke-width=".9"/><rect x="608.8000000000001" y="67.89999999999999" width="1.8" height="1.8" fill="#d0d0d0"/><rect x="608.8000000000001" y="79.1" width="1.8" height="1.8" fill="#d0d0d0"/><rect x="620.7" y="67.89999999999999" width="1.8" height="1.8" fill="#d0d0d0"/><rect x="620.7" y="79.1" width="1.8" height="1.8" fill="#d0d0d0"/><path d="M611.6 74.4 Q615.6 70.6 619.7 74.4 Q615.6 78.2 611.6 74.4Z" fill="#d0d0d0"/><circle cx="615.6" cy="74.4" r="1.3" fill="#3f3f3f"/><rect x="631.6" y="68.8" width="11.899999999999977" height="11.200000000000003" fill="none" stroke="#d0d0d0" stroke-width=".9"/><rect x="630.7" y="67.89999999999999" width="1.8" height="1.8" fill="#d0d0d0"/><rect x="630.7" y="79.1" width="1.8" height="1.8" fill="#d0d0d0"/><rect x="642.6" y="67.89999999999999" width="1.8" height="1.8" fill="#d0d0d0"/><rect x="642.6" y="79.1" width="1.8" height="1.8" fill="#d0d0d0"/><rect x="637" y="69.6" width="1.2" height="9.6" fill="#d0d0d0"/><path d="M633.6 72.8 L635.8 74.4 L633.6 76Z M641.6 72.8 L639.4 74.4 L641.6 76Z" fill="#d0d0d0"/><rect x="653" y="68.3" width="2.6" height="2.4" fill="none" stroke="#d0d0d0" stroke-width=".7"/><rect x="657.6" y="68.3" width="2.6" height="2.4" fill="none" stroke="#d0d0d0" stroke-width=".7"/><rect x="662.2" y="68.3" width="3.4" height="2.4" fill="none" stroke="#d0d0d0" stroke-width=".7"/><rect x="662.2" y="72.9" width="3.4" height="2.4" fill="none" stroke="#d0d0d0" stroke-width=".7"/><rect x="662.2" y="77.5" width="3.4" height="2.4" fill="none" stroke="#d0d0d0" stroke-width=".7"/><rect x="653.4" y="72.8" width="6.6" height="7" fill="none" stroke="#d0d0d0" stroke-width=".9" stroke-dasharray="1.6 1.2"/></svg>
<div style="left:676.3px;top:67px;width:116.6px;height:15px;background:#3f3f3f;border-radius:2px;"></div>
<svg style="left:0px;top:0px;" width="1500" height="88" viewBox="0 0 1500 88"><rect x="689.2" y="69.6" width="11.199999999999932" height="10.800000000000011" fill="none" stroke="#d0d0d0" stroke-width=".9"/><rect x="688.3000000000001" y="68.69999999999999" width="1.8" height="1.8" fill="#d0d0d0"/><rect x="688.3000000000001" y="79.5" width="1.8" height="1.8" fill="#d0d0d0"/><rect x="699.5" y="68.69999999999999" width="1.8" height="1.8" fill="#d0d0d0"/><rect x="699.5" y="79.5" width="1.8" height="1.8" fill="#d0d0d0"/><path d="M693.2 72.8 L697.2 75 L693.2 77.2Z" fill="#d0d0d0"/></svg>
<span class="t" style="left:704.4px;top:68.10px;font-size:9.8px;line-height:13.8px;color:#e2e2e2;transform:scaleX(0.9723);">Convert to Curves</span>
<div style="left:798.3px;top:66px;width:1px;height:17px;background:#272727;"></div>
<div style="left:807.1px;top:67px;width:20.6px;height:14.6px;background:#3f3f3f;border-radius:2px;"></div>
<div style="left:829px;top:67px;width:20.6px;height:14.6px;background:#3f3f3f;border-radius:2px;"></div>
<div style="left:850.9px;top:67px;width:20.6px;height:14.6px;background:#3f3f3f;border-radius:2px;"></div>
<div style="left:881.3px;top:67px;width:20.6px;height:14.6px;background:#3f3f3f;border-radius:2px;"></div>
<div style="left:903.2px;top:67px;width:20.6px;height:14.6px;background:#3f3f3f;border-radius:2px;"></div>
<div style="left:925.1px;top:67px;width:20.6px;height:14.6px;background:#3f3f3f;border-radius:2px;"></div>
<svg style="left:0px;top:0px;" width="1500" height="88" viewBox="0 0 1500 88"><rect x="811.8" y="68.6" width=".9" height="11.4" fill="#3592c0"/><rect x="813.6" y="70.8" width="5.4" height="2.8" fill="#b4b4b4"/><rect x="813.6" y="75" width="8.6" height="2.8" fill="#b4b4b4"/><rect x="838.2" y="68.6" width=".9" height="11.4" fill="#3592c0"/><rect x="836" y="70.8" width="5.4" height="2.8" fill="#b4b4b4"/><rect x="834" y="75" width="9.4" height="2.8" fill="#b4b4b4"/><rect x="865.2" y="68.6" width=".9" height="11.4" fill="#3592c0"/><rect x="858.6" y="70.8" width="5.4" height="2.8" fill="#b4b4b4"/><rect x="855.6" y="75" width="8.4" height="2.8" fill="#b4b4b4"/><rect x="886" y="69" width="11.4" height=".9" fill="#3592c0"/><rect x="888.2" y="71" width="2.8" height="5.2" fill="#b4b4b4"/><rect x="892.4" y="71" width="2.8" height="8.2" fill="#b4b4b4"/><rect x="907.6" y="73.6" width="11.6" height=".9" fill="#3592c0"/><rect x="910" y="69.2" width="2.8" height="9.8" fill="#b4b4b4"/><rect x="914.2" y="71" width="2.8" height="6" fill="#b4b4b4"/><rect x="929.4" y="78.6" width="11.6" height=".9" fill="#3592c0"/><rect x="932" y="72.6" width="2.8" height="5.4" fill="#b4b4b4"/><rect x="936.2" y="69.4" width="2.8" height="8.6" fill="#b4b4b4"/></svg>
<span class="t" style="left:46px;top:92.00px;font-size:9.6px;line-height:13.6px;color:#e4e4e4;transform:scaleX(0.9050);">home map (48.4%)</span>
<span class="t" style="left:665.6px;top:92.00px;font-size:9.6px;line-height:13.6px;color:#e4e4e4;transform:scaleX(0.9286);">home map - resized [Modified] (33.1%)</span>
<svg style="left:640px;top:90px;" width="16" height="16" viewBox="0 0 16 16"><path d="M5.8 5 L10.6 9.9 M10.6 5 L5.8 9.9" stroke="#dedede" stroke-width="1.05"/></svg>
<svg style="left:1259px;top:90px;" width="16" height="16" viewBox="0 0 16 16"><path d="M5.8 5 L10.6 9.9 M10.6 5 L5.8 9.9" stroke="#dedede" stroke-width="1.05"/></svg>
<span class="t" style="left:17.7px;top:855.90px;font-size:9.4px;line-height:13.4px;color:#b4b4b4;transform:scaleX(1.0215);">'roads' selected.</span>
<span class="t" style="left:89.6px;top:855.90px;font-size:9.4px;line-height:13.4px;color:#f0f0f0;font-weight:bold;transform:scaleX(0.9832);">Drag</span>
<span class="t" style="left:114.3px;top:855.90px;font-size:9.4px;line-height:13.4px;color:#b4b4b4;transform:scaleX(1.0191);">to move selection.</span>
<span class="t" style="left:195px;top:855.90px;font-size:9.4px;line-height:13.4px;color:#f0f0f0;font-weight:bold;transform:scaleX(0.9372);">Click</span>
<span class="t" style="left:219.3px;top:855.90px;font-size:9.4px;line-height:13.4px;color:#b4b4b4;transform:scaleX(1.0362);">another object to select it.</span>
<span class="t" style="left:333.2px;top:855.90px;font-size:9.4px;line-height:13.4px;color:#f0f0f0;font-weight:bold;transform:scaleX(0.9550);">Click</span>
<span class="t" style="left:358px;top:855.90px;font-size:9.4px;line-height:13.4px;color:#b4b4b4;transform:scaleX(1.0152);">on an empty area to deselect selection.</span>
<span class="t" style="left:526.8px;top:855.90px;font-size:9.4px;line-height:13.4px;color:#f0f0f0;font-weight:bold;transform:scaleX(1.0196);">Return</span>
<span class="t" style="left:561px;top:855.90px;font-size:9.4px;line-height:13.4px;color:#b4b4b4;transform:scaleX(1.0242);">to enter move/duplicate values.</span>
<div style="left:7.2px;top:88.8px;width:23.8px;height:23.8px;background:#282828;border-radius:3px;"></div>
<svg style="left:0px;top:0px;" width="40" height="872" viewBox="0 0 40 872"><path d="M15.2 94 L15.2 105.6 L18 103.2 L19.9 107.4 L21.7 106.6 L19.8 102.5 L23.6 102.3Z" fill="#0c0c0c" stroke="#cfcfcf" stroke-width="1" stroke-linejoin="round"/><rect x="13.4" y="120.6" width="11.2" height="11.6" rx="1.5" fill="none" stroke="#e8e8e8" stroke-width="1" stroke-dasharray="1.6 1.2"/><rect x="15.2" y="122.4" width="7.8" height="8.2" rx=".8" fill="#1e4e60" stroke="#25b9a2" stroke-width="1.1"/><path d="M12 121 H16.4 M14.2 118.9 V123.2" stroke="#25c9a8" stroke-width="1.2"/><path d="M15.8 146.4 L24 151.4 L19.6 152.4 L17.4 156.4Z" fill="#e4e4e4"/><path d="M29 158.0 V161.4 H25.6Z" fill="#e6e6e6"/><circle cx="19.2" cy="176.2" r="6.7" fill="none" stroke="#e0e0e0" stroke-width="1" stroke-dasharray="1.5 1.3"/><circle cx="19.2" cy="176.2" r="3.9" fill="none" stroke="#5d70e4" stroke-width="2.7"/><circle cx="19.2" cy="176.2" r="1.7" fill="none" stroke="#c8c8c8" stroke-width=".8"/><path d="M22.6 170.6 L27 168.8 L26 173.4Z" fill="#d8d8d8"/><rect x="12.6" y="194.6" width="9" height="9" fill="#8c8c8c" stroke="#d0d0d0" stroke-width=".7"/><path d="M14.2 208.2 Q14.6 196 26.6 195.6" fill="none" stroke="#c8202f" stroke-width="3.2"/><g transform="translate(19.4,226) rotate(45)"><path d="M-2.6 -4.6 H2.6 L3.4 1 L0 9.2 L-3.4 1Z" fill="#b4b4b4"/><path d="M0 9.2 V2.2" stroke="#444" stroke-width=".7"/><circle cx="0" cy="1.8" r=".9" fill="#444"/><rect x="-3" y="-8.6" width="6" height="4" rx="1" fill="#f0604e"/></g><g transform="translate(20.4,250) rotate(45)"><rect x="-2.3" y="-6.8" width="4.6" height="9.6" fill="#e6c74e"/><path d="M-2.3 2.8 H2.3 L0 7.2Z" fill="#e8d2a8"/><path d="M-.8 5.6 H.8 L0 7.2Z" fill="#555"/><rect x="-2.3" y="-9" width="4.6" height="2.4" rx=".8" fill="#e05ed0"/></g><path d="M16 257.6 Q18.4 259 20 256.4 Q21.6 254 25.6 254.6" fill="none" stroke="#c8c8c8" stroke-width=".9"/><g transform="translate(20,276) rotate(45)"><path d="M-2.2 -8.8 Q0 -10.6 2.2 -8.8 L1.6 .8 H-1.6Z" fill="#1f98e2"/><path d="M-1.8 .8 H1.8 Q3 4.6 0 8.4 Q-3 4.6 -1.8 .8Z" fill="#b08264"/></g><path d="M15.6 283 Q18 284.6 19.8 281.8 Q21 279.6 24 279.8" fill="none" stroke="#c8c8c8" stroke-width=".9"/><path d="M25.6 275.6 V283.6" stroke="#d8d8d8" stroke-width=".8"/><circle cx="25.6" cy="276" r="1" fill="#d8d8d8"/><circle cx="25.6" cy="283.4" r="1" fill="#d8d8d8"/><circle cx="25.6" cy="279.8" r="1" fill="#d8d8d8"/><g transform="translate(20,301) rotate(45)"><rect x="-2.1" y="-9.8" width="4.2" height="9.4" rx="2" fill="#c27a54"/><circle cx="0" cy="-7.6" r=".9" fill="#333"/><path d="M-2 -.2 H2 L1.6 4 L-1.2 9.6Z" fill="#a8a8a8"/></g><g transform="translate(21.4,326.6) rotate(-38)"><path d="M-4.4 -3.6 H4.4 V3.2 Q4.4 4.8 2.8 4.8 H-2.8 Q-4.4 4.8 -4.4 3.2Z" fill="#b0b0b0"/><ellipse cx="0" cy="-3.6" rx="4.4" ry="1.5" fill="#d8d8d8" stroke="#555" stroke-width=".5"/><path d="M-4.4 -3.6 Q0 -10 4.4 -3.6" fill="none" stroke="#c4c4c4" stroke-width=".9"/></g><path d="M14.4 331.6 V324.4 L18.6 320.6" fill="none" stroke="#2f9fe0" stroke-width="1" stroke-dasharray="1.4 1.2"/><circle cx="14.4" cy="331.8" r="1.3" fill="#333" stroke="#e0e0e0" stroke-width=".8"/><circle cx="14.4" cy="324.2" r="1.1" fill="#e0e0e0"/><circle cx="18.8" cy="320.4" r="1.1" fill="#e0e0e0"/><defs><linearGradient id="gt" x1="0" y1="0" x2="1" y2="0"><stop offset="0" stop-color="#2f8fc8"/><stop offset=".35" stop-color="#86ccf0"/><stop offset=".52" stop-color="#a8dcf4"/><stop offset=".56" stop-color="#e8bc96"/><stop offset=".8" stop-color="#ecd6a0"/><stop offset="1" stop-color="#e6e4a2"/></linearGradient></defs><g transform="translate(16.6,348.5) rotate(-40)"><rect x="-5.8" y="-2.5" width="11.6" height="5" rx="1.2" fill="url(#gt)"/></g><g transform="translate(21.6,353.7) rotate(-40)"><rect x="-5.6" y="-2.5" width="11.2" height="5" rx="1.2" fill="url(#gt)"/></g><path d="M14.4 355.8 L24.4 346.4" stroke="#bdbdbd" stroke-width="1.1"/><circle cx="13.5" cy="356.8" r="1.5" fill="#555" stroke="#d8d8d8" stroke-width=".9"/><circle cx="25.3" cy="345.5" r="1.5" fill="#555" stroke="#d8d8d8" stroke-width=".9"/><path d="M29.2 357.6 V361 H25.8Z" fill="#e6e6e6"/><rect x="12.2" y="370.6" width="14.6" height="11" rx="1" fill="#4d9bc9"/><path d="M12.8 377.4 Q16 375.6 19.4 377.6 Q23 379.6 26.2 377.2 V381 H12.8Z" fill="#1c4f68"/><path d="M14.8 375.6 L17.2 372.6 L19.8 375.6Z" fill="#f0f0f0"/><circle cx="23.2" cy="373.6" r="1.1" fill="#f0f0f0"/><path d="M16 394.8 V405 H26.2 M13.2 397.8 H23.4 V408" fill="none" stroke="#e8e8e8" stroke-width="1.4"/><path d="M14 407 L25.6 395.4" stroke="#b8b8b8" stroke-width=".8"/><rect x="13.8" y="420.8" width="11.8" height="11.6" rx="1" fill="#1f2b2e" stroke="#a4a4a4" stroke-width="1.2"/><circle cx="19.7" cy="451.2" r="5.9" fill="#1f2b2e" stroke="#cccccc" stroke-width="1"/><rect x="13.8" y="470.6" width="11.8" height="11.4" rx="3.2" fill="#1f2b2e" stroke="#b4b4b4" stroke-width="1.2"/><path d="M28.8 482.20000000000005 V485.6 H25.400000000000002Z" fill="#e6e6e6"/><circle cx="17.8" cy="499.6" r="5" fill="none" stroke="#3aa0e0" stroke-width="1.1" stroke-dasharray="1.4 1.3"/><rect x="17" y="499.4" width="9.6" height="9.2" fill="#208a9a"/><rect x="16.4" y="498.8" width="10.6" height="10.2" fill="none" stroke="#e0e0e0" stroke-width=".8" stroke-dasharray="1.4 1.4"/><path d="M17 499.4 H23.2 A6.2 6.2 0 0 1 17 505.6Z" fill="#42ea92"/><rect x="13.2" y="520.2" width="12.8" height="12.6" fill="#2c2c2c" stroke="#2c82ba" stroke-width="1.2"/><rect x="12.2" y="519.2" width="2" height="2" fill="#2c82ba"/><rect x="25" y="519.2" width="2" height="2" fill="#2c82ba"/><rect x="12.2" y="531.8" width="2" height="2" fill="#2c82ba"/><rect x="25" y="531.8" width="2" height="2" fill="#2c82ba"/><path d="M15.8 530.6 L19.6 522.4 L23.4 530.6 M17.2 527.8 H22" fill="none" stroke="#e8e8e8" stroke-width="1.1"/><path d="M28.8 532.2 V535.6 H25.400000000000002Z" fill="#e6e6e6"/><path d="M13 557.6 L20 550.6" stroke="#b4b4b4" stroke-width="2.4" stroke-linecap="round"/><ellipse cx="23" cy="547.6" rx="3.4" ry="3.1" fill="#c8805e"/><path d="M19.4 549 L21.8 551.4" stroke="#8a5a44" stroke-width="1.6"/><path d="M28.8 557.4 V560.8 H25.400000000000002Z" fill="#e6e6e6"/><g transform="translate(19.6,576.6) rotate(-40)"><rect x="-8.4" y="-2.6" width="16.8" height="5.2" rx=".6" fill="#e6c232"/><path d="M-6 -2.6 V-.4 M-3.6 -2.6 V.2 M-1.2 -2.6 V-.4 M1.2 -2.6 V.2 M3.6 -2.6 V-.4 M6 -2.6 V.2" stroke="#7a6410" stroke-width=".7"/></g><path d="M28.8 582.4 V585.8 H25.400000000000002Z" fill="#e6e6e6"/><rect x="6.4" y="593.8" width="25.8" height="1" fill="#5c5c5c"/><rect x="13.6" y="608.8" width="2.2" height="7" rx="1.1" fill="#e7c9ab"/><rect x="16.2" y="606.2" width="2.2" height="9" rx="1.1" fill="#e7c9ab"/><rect x="18.8" y="605.2" width="2.2" height="10" rx="1.1" fill="#e7c9ab"/><rect x="21.4" y="606.8" width="2.2" height="9" rx="1.1" fill="#e7c9ab"/><path d="M13.6 612.6 H23.6 V614 L24.4 612 Q25.2 610.8 25.8 611.6 Q26.2 612.4 25.4 614.4 Q24.6 617.6 22.4 619.4 Q20 620.8 17.4 620 Q14.2 618.4 13.6 612.6Z" fill="#e7c9ab"/><path d="M28.8 619.2 V622.6 H25.400000000000002Z" fill="#e6e6e6"/><circle cx="18.9" cy="655.8" r="8.2" fill="#3c3c3c" stroke="#fafafa" stroke-width="2.4"/><circle cx="18.9" cy="665.2" r="8.9" fill="#000" stroke="#525252" stroke-width="1.4"/><path d="M14.6 680 Q18.9 685 23.2 680" fill="none" stroke="#8c8c8c" stroke-width=".9"/><path d="M13.6 680.8 L14.4 678.6 L16 680.4Z M24.2 680.8 L23.4 678.6 L21.8 680.4Z" fill="#8c8c8c"/></svg>
<div style="left:1282.2px;top:87px;width:218px;height:23.6px;background:#262626;"></div>
<div style="left:1375.3px;top:88px;width:33.5px;height:22.6px;background:#363636;"></div>
<svg style="left:1287px;top:94.4px;" width="6" height="8" viewBox="0 0 6 8"><rect x="1" y="1" width=".9" height="6.2" fill="#9a9a9a"/><rect x="3.4" y="1" width=".9" height="6.2" fill="#9a9a9a"/></svg>
<svg style="left:1485px;top:91.7px;" width="10" height="12" viewBox="0 0 10 12"><rect x=".4" y="1.60" width="8.4" height="1.4" fill="#dedede"/><rect x=".4" y="5.30" width="8.4" height="1.4" fill="#dedede"/><rect x=".4" y="9.00" width="8.4" height="1.4" fill="#dedede"/></svg>
<span class="t" style="left:1300.8px;top:91.40px;font-size:9.6px;line-height:13.6px;color:#bcbcbc;transform:scaleX(0.9266);">Colour</span>
<span class="t" style="left:1334.6px;top:91.40px;font-size:9.6px;line-height:13.6px;color:#bcbcbc;transform:scaleX(0.8683);">Swatches</span>
<span class="t" style="left:1379px;top:91.40px;font-size:9.6px;line-height:13.6px;color:#f4f4f4;transform:scaleX(0.9046);">Stroke</span>
<span class="t" style="left:1412px;top:91.40px;font-size:9.6px;line-height:13.6px;color:#bcbcbc;transform:scaleX(0.9113);">Appearance</span>
<span class="t" style="left:1288px;top:118.10px;font-size:9.6px;line-height:13.6px;color:#bcbcbc;transform:scaleX(0.8363);">Style:</span>
<div style="left:1319.3px;top:117.3px;width:20.8px;height:15.8px;background:#434343;border-radius:2px;"></div>
<div style="left:1341.3px;top:117.3px;width:20.8px;height:15.8px;background:#262626;border-radius:2px;"></div>
<div style="left:1363px;top:117.3px;width:20.8px;height:15.8px;background:#434343;border-radius:2px;"></div>
<div style="left:1385px;top:117.3px;width:20.8px;height:15.8px;background:#434343;border-radius:2px;"></div>
<svg style="left:0px;top:0px;" width="1500" height="140" viewBox="0 0 1500 140"><circle cx="1329.8" cy="125.2" r="5.4" fill="none" stroke="#e8e8e8" stroke-width="1"/><path d="M1327.8 123.2 L1331.8 127.2 M1331.8 123.2 L1327.8 127.2" stroke="#e8e8e8" stroke-width="1"/><path d="M1347 129.6 L1356.6 120.6" stroke="#e8e8e8" stroke-width="1.3"/><path d="M1369 129.6 L1378.6 120.6" stroke="#e8e8e8" stroke-width="1.4" stroke-dasharray="1.8 2.4"/><path d="M1397.6 126 L1402.2 120.4 L1403.4 121.4 L1399 127Z" fill="#e8e8e8"/><path d="M1397.4 125.6 Q1395 126 1394.6 128.2 Q1394.2 129.6 1392.6 130.4 Q1396.6 131.2 1398.4 128.6 Q1399.2 127.2 1398.8 126.6Z" fill="#e8e8e8"/></svg>
<span class="t" style="left:1288px;top:140.50px;font-size:9.6px;line-height:13.6px;color:#bcbcbc;transform:scaleX(0.9483);">Width:</span>
<div style="left:1320.3px;top:145px;width:132.7px;height:4.4px;background:#222;border-radius:2.2px;"></div>
<div style="left:1320.3px;top:145px;width:11px;height:4.4px;background:#5b86c0;border-radius:2.2px;"></div>
<div style="left:1327.3px;top:143.2px;width:8px;height:8px;border-radius:50%;background:#ececec"></div>
<div style="left:1456px;top:139.3px;width:40px;height:15.4px;background:#222222;border-radius:2px;"></div>
<span class="t" style="left:1460.7px;top:140.40px;font-size:9.6px;line-height:13.6px;color:#e8e8e8;transform:scaleX(0.9195);">0,3 pt</span>
<span class="t" style="left:1288px;top:159.80px;font-size:9.6px;line-height:13.6px;color:#bcbcbc;transform:scaleX(0.8515);">Cap:</span>
<div style="left:1319.3px;top:159.1px;width:20.8px;height:15.8px;background:#434343;border-radius:2px;"></div>
<div style="left:1341.3px;top:159.1px;width:20.8px;height:15.8px;background:#262626;border-radius:2px;"></div>
<div style="left:1363px;top:159.1px;width:20.8px;height:15.8px;background:#434343;border-radius:2px;"></div>
<svg style="left:0px;top:0px;" width="1500" height="180" viewBox="0 0 1500 180"><path d="M1323.2 162.8 H1331 A4.2 4.2 0 0 1 1331 171.2 H1323.2Z" fill="#e8e8e8"/><path d="M1323.2 167 H1331" stroke="#333" stroke-width="1"/><circle cx="1331" cy="167" r=".9" fill="#222"/><rect x="1345.2" y="162.8" width="10.4" height="8.4" fill="#e8e8e8"/><path d="M1345.2 167 H1355.6" stroke="#262626" stroke-width="1.1"/><rect x="1355.2" y="164.8" width="2.6" height="4.4" fill="none" stroke="#e8e8e8" stroke-width=".7"/><circle cx="1355.4" cy="167" r=".9" fill="#111"/><rect x="1367" y="162.8" width="13" height="8.4" fill="#e8e8e8"/><path d="M1367 167 H1376" stroke="#333" stroke-width="1"/><circle cx="1376" cy="167" r=".9" fill="#222"/></svg>
<span class="t" style="left:1288px;top:181.00px;font-size:9.6px;line-height:13.6px;color:#bcbcbc;transform:scaleX(0.8763);">Join:</span>
<div style="left:1319.3px;top:180.2px;width:20.8px;height:15.8px;background:#262626;border-radius:2px;"></div>
<div style="left:1341.3px;top:180.2px;width:20.8px;height:15.8px;background:#434343;border-radius:2px;"></div>
<div style="left:1363px;top:180.2px;width:20.8px;height:15.8px;background:#434343;border-radius:2px;"></div>
<svg style="left:0px;top:0px;" width="1500" height="200" viewBox="0 0 1500 200"><path d="M1324.6 183 Q1324.6 193.8 1335.4 193.8" fill="none" stroke="#e8e8e8" stroke-width="1"/><path d="M1328.8 183 Q1328.8 189.6 1335.4 189.6 V193.2 Q1325.4 193.2 1325.2 183Z" fill="#b4b4b4"/><path d="M1346.4 183 L1346.4 186 L1353.4 193.8 H1357.4" fill="none" stroke="#e8e8e8" stroke-width="1"/><path d="M1350.8 183 V185.8 L1354.2 189.6 H1357.4 V193.2 H1353.8 L1347 186 V183Z" fill="#b4b4b4"/><path d="M1368.4 183 V193.8 H1379.4" fill="none" stroke="#e8e8e8" stroke-width="1"/><path d="M1369 183 H1372.8 V189.6 H1379.4 V193.2 H1369Z" fill="#b4b4b4"/></svg>
<span class="t" style="left:1431.8px;top:180.60px;font-size:9.6px;line-height:13.6px;color:#bcbcbc;transform:scaleX(0.9370);">Mitre:</span>
<div style="left:1456px;top:178.8px;width:40px;height:15.5px;background:#222222;border-radius:2px;"></div>
<span class="t" style="left:1460.4px;top:180.00px;font-size:9.6px;line-height:13.6px;color:#e8e8e8;transform:scaleX(0.8649);">2</span>
<span class="t" style="left:1288px;top:201.80px;font-size:9.6px;line-height:13.6px;color:#bcbcbc;transform:scaleX(0.9406);">Align:</span>
<div style="left:1319.3px;top:201.2px;width:20.8px;height:15.8px;background:#262626;border-radius:2px;"></div>
<div style="left:1341.3px;top:201.2px;width:20.8px;height:15.8px;background:#434343;border-radius:2px;"></div>
<div style="left:1363px;top:201.2px;width:20.8px;height:15.8px;background:#434343;border-radius:2px;"></div>
<svg style="left:0px;top:0px;" width="1500" height="220" viewBox="0 0 1500 220"><path d="M1324.6 214.4 V203.4 H1335.1999999999998 V207.8 H1329.1999999999998 V214.4Z" fill="#e8e8e8"/><path d="M1326.8999999999999 214.4 V205.70000000000002 H1335.1999999999998" fill="none" stroke="#222" stroke-width=".9"/><circle cx="1326.8999999999999" cy="205.70000000000002" r=".9" fill="#111"/><path d="M1347.6 214.4 V205.0 H1357.1999999999998 V208.8 H1352.0 V214.4Z" fill="#e8e8e8"/><path d="M1346.6 214.4 V203.4 H1357.1999999999998" fill="none" stroke="#cfcfcf" stroke-width=".7"/><circle cx="1346.6" cy="203.4" r=".9" fill="#cfcfcf"/><path d="M1368.4 214.4 V203.4 H1379.0 V207.8 H1373.0 V214.4Z" fill="#e8e8e8"/><path d="M1373.0 214.4 V207.8 H1379.0" fill="none" stroke="#333" stroke-width=".9"/><circle cx="1373.0" cy="207.8" r=".9" fill="#111"/></svg>
<div style="left:1285.6px;top:225.3px;width:211.2px;height:1px;background:#2a2a2a;"></div>
<span class="t" style="left:1288px;top:238.10px;font-size:9.6px;line-height:13.6px;color:#bcbcbc;transform:scaleX(0.8966);">Order:</span>
<div style="left:1319.3px;top:237.4px;width:20.8px;height:15.8px;background:#434343;border-radius:2px;"></div>
<div style="left:1341.3px;top:237.4px;width:20.4px;height:15.8px;background:#262626;border-radius:2px;"></div>
<svg style="left:0px;top:0px;" width="1500" height="260" viewBox="0 0 1500 260"><rect x="1325" y="241" width="6.4" height="6" fill="none" stroke="#e8e8e8" stroke-width="1"/><rect x="1328" y="243.8" width="6.6" height="6.2" fill="#b8b8b8" stroke="#434343" stroke-width=".6"/><rect x="1349.6" y="243.6" width="6.6" height="6.2" fill="none" stroke="#bcbcbc" stroke-width=".9"/><rect x="1346.8" y="241" width="6.6" height="6.2" fill="#262626" stroke="#e8e8e8" stroke-width="1.1"/><rect x="1349.4" y="243.4" width="1.6" height="1.6" fill="#bbb"/></svg>
<div style="left:1416.1px;top:238.9px;width:9.8px;height:9.8px;background:#262626;border-radius:1.5px;"></div>
<span class="t" style="left:1430px;top:237.50px;font-size:9.6px;line-height:13.6px;color:#d8d8d8;transform:scaleX(0.9198);">Scale with object</span>
<div style="left:1285.6px;top:261.2px;width:211.2px;height:1px;background:#2a2a2a;"></div>
<span class="t" style="left:1288px;top:274.70px;font-size:9.6px;line-height:13.6px;color:#bcbcbc;transform:scaleX(0.8708);">Start:</span>
<div style="left:1319.3px;top:273.8px;width:34.7px;height:16px;background:#434343;border-radius:2px;"></div>
<div style="left:1327px;top:280.9px;width:15.400000000000091px;height:1.3px;background:#e8e8e8;"></div>
<svg style="left:1343px;top:276.5px;" width="10" height="10" viewBox="0 0 10 10"><path d="M2.8 3.6 L5.2 6 L7.6 3.6" fill="none" stroke="#dcdcdc" stroke-width="1.2"/></svg>
<div style="left:1358px;top:273.8px;width:51.8px;height:16px;background:#2f2f2f;border-radius:2px;"></div>
<span class="t" style="left:1363.3px;top:275.30px;font-size:9.6px;line-height:13.6px;color:#858585;transform:scaleX(0.8667);">100 %</span>
<svg style="left:1399.6px;top:276.5px;" width="10" height="10" viewBox="0 0 10 10"><path d="M2.8 3.6 L5.2 6 L7.6 3.6" fill="none" stroke="#6e6e6e" stroke-width="1.1"/></svg>
<div style="left:1452.8px;top:273.8px;width:20.5px;height:16px;background:#262626;border-radius:2px;"></div>
<div style="left:1474.3px;top:273.8px;width:20.6px;height:16px;background:#434343;border-radius:2px;"></div>
<span class="t" style="left:1288px;top:295.60px;font-size:9.6px;line-height:13.6px;color:#bcbcbc;transform:scaleX(0.8235);">End:</span>
<div style="left:1319.3px;top:294.9px;width:34.7px;height:16px;background:#434343;border-radius:2px;"></div>
<div style="left:1322.2px;top:301.79999999999995px;width:14.799999999999955px;height:1.3px;background:#e8e8e8;"></div>
<svg style="left:1343px;top:297.4px;" width="10" height="10" viewBox="0 0 10 10"><path d="M2.8 3.6 L5.2 6 L7.6 3.6" fill="none" stroke="#dcdcdc" stroke-width="1.2"/></svg>
<div style="left:1358px;top:294.9px;width:51.8px;height:16px;background:#2f2f2f;border-radius:2px;"></div>
<span class="t" style="left:1363.3px;top:296.20px;font-size:9.6px;line-height:13.6px;color:#858585;transform:scaleX(0.8667);">100 %</span>
<svg style="left:1399.6px;top:297.4px;" width="10" height="10" viewBox="0 0 10 10"><path d="M2.8 3.6 L5.2 6 L7.6 3.6" fill="none" stroke="#6e6e6e" stroke-width="1.1"/></svg>
<div style="left:1452.8px;top:294.9px;width:20.5px;height:16px;background:#434343;border-radius:2px;"></div>
<div style="left:1474.3px;top:294.9px;width:20.6px;height:16px;background:#434343;border-radius:2px;"></div>
<svg style="left:0px;top:0px;" width="1500" height="320" viewBox="0 0 1500 320"><rect x="1413.8" y="282.4" width="4.6" height="6.6" rx="2" fill="none" stroke="#8a8a8a" stroke-width="1"/><rect x="1413.8" y="291.8" width="4.6" height="6.6" rx="2" fill="none" stroke="#8a8a8a" stroke-width="1"/><path d="M1416.1 288 V293" stroke="#363636" stroke-width="2.6"/><path d="M1413 290.4 H1419.4" stroke="#8a8a8a" stroke-width=".7" stroke-dasharray="1.4 1.2"/><path d="M1457.6 281.8 H1465.6 M1462.8 278.8 L1465.8 281.8 L1462.8 284.8" fill="none" stroke="#e8e8e8" stroke-width="1.2"/><path d="M1467.8 276.6 V287" stroke="#e8e8e8" stroke-width="1.2"/><path d="M1479.6 281.8 H1490.2 M1487 278.8 L1490.2 281.8 L1487 284.8" fill="none" stroke="#e8e8e8" stroke-width="1.2"/><path d="M1484.8 277 V286.6" stroke="#e8e8e8" stroke-width="1" stroke-dasharray="3.2 3"/><path d="M1464.6 299.8 H1460.6 Q1458.4 299.8 1458.4 302 Q1458.4 304 1460.6 304 H1465.6 Q1467.8 304 1467.8 302 M1460 306.6 H1465.4 Q1467.8 306.6 1467.8 304.4 M1458.8 302.2 Q1458.8 300 1461 300" fill="none" stroke="#e8e8e8" stroke-width="1"/><path d="M1463.8 298.2 L1466.2 299.8 L1463.8 301.4Z M1465 305 L1467.6 306.6 L1465 308.2Z" fill="#e8e8e8"/><path d="M1480 300.6 A5.4 5.4 0 0 1 1489.8 300.8 M1489.6 305.2 A5.4 5.4 0 0 1 1479.8 305" fill="none" stroke="#e8e8e8" stroke-width="1"/><path d="M1478.6 301.6 L1480 298.8 L1481.8 301.4Z M1491 304.2 L1489.6 307 L1487.8 304.4Z" fill="#e8e8e8"/><path d="M1483.2 301.4 L1486.2 304.4 M1486.2 301.4 L1483.2 304.4" stroke="#e8e8e8" stroke-width=".9"/></svg>
<div style="left:1285.6px;top:318.8px;width:211.2px;height:1px;background:#2a2a2a;"></div>
<div style="left:1288px;top:333.5px;width:65px;height:16.8px;background:#434343;border-radius:2px;"></div>
<span class="t" style="left:1295.4px;top:336.00px;font-size:10px;line-height:14px;color:#ececec;transform:scaleX(0.9256);">Properties...</span>
<span class="t" style="left:1358.5px;top:335.60px;font-size:9.6px;line-height:13.6px;color:#b4b4b4;transform:scaleX(0.8406);">Pressure:</span>
<div style="left:1397px;top:335px;width:63px;height:14.2px;background:#4b4b4b;border-radius:1px;"></div>
<div style="left:1397.5px;top:335.4px;width:62px;height:1px;background:#8c8c8c;"></div>
<div style="left:1282.2px;top:365.4px;width:218px;height:23.6px;background:#262626;"></div>
<div style="left:1296.9px;top:367px;width:32.7px;height:22px;background:#363636;"></div>
<svg style="left:1287px;top:373.2px;" width="6" height="8" viewBox="0 0 6 8"><rect x="1" y="1" width=".9" height="6.2" fill="#9a9a9a"/><rect x="3.4" y="1" width=".9" height="6.2" fill="#9a9a9a"/></svg>
<svg style="left:1485px;top:370.8px;" width="10" height="12" viewBox="0 0 10 12"><rect x=".4" y="1.60" width="8.4" height="1.4" fill="#dedede"/><rect x=".4" y="5.30" width="8.4" height="1.4" fill="#dedede"/><rect x=".4" y="9.00" width="8.4" height="1.4" fill="#dedede"/></svg>
<span class="t" style="left:1300.8px;top:370.00px;font-size:9.6px;line-height:13.6px;color:#f4f4f4;transform:scaleX(0.8501);">Layers</span>
<span class="t" style="left:1333.1px;top:370.00px;font-size:9.6px;line-height:13.6px;color:#bcbcbc;transform:scaleX(0.8609);">Brushes</span>
<span class="t" style="left:1371.7px;top:370.00px;font-size:9.6px;line-height:13.6px;color:#bcbcbc;transform:scaleX(0.8749);">Quick FX</span>
<span class="t" style="left:1414.6px;top:370.00px;font-size:9.6px;line-height:13.6px;color:#bcbcbc;transform:scaleX(0.8564);">Styles</span>
<span class="t" style="left:1288.8px;top:395.60px;font-size:8.8px;line-height:12.8px;color:#b0b0b0;transform:scaleX(0.9036);">Opacity:</span>
<div style="left:1321.4px;top:392.8px;width:43.4px;height:15.3px;background:#222222;border-radius:2px;"></div>
<span class="t" style="left:1326.2px;top:394.20px;font-size:9.6px;line-height:13.6px;color:#ececec;transform:scaleX(0.8667);">100 %</span>
<svg style="left:1354.6px;top:396px;" width="10" height="10" viewBox="0 0 10 10"><path d="M2.6 3.6 L5 6 L7.4 3.6" fill="none" stroke="#dcdcdc" stroke-width="1.2"/></svg>
<div style="left:1369.2px;top:392.8px;width:90.9px;height:15.3px;background:#434343;border-radius:2px;"></div>
<span class="t" style="left:1372.7px;top:394.20px;font-size:9.6px;line-height:13.6px;color:#ececec;transform:scaleX(0.8958);">Passthrough</span>
<svg style="left:1449.6px;top:396px;" width="10" height="10" viewBox="0 0 10 10"><path d="M2.6 3.6 L5 6 L7.4 3.6" fill="none" stroke="#dcdcdc" stroke-width="1.2"/></svg>
<svg style="left:0px;top:0px;" width="1500" height="412" viewBox="0 0 1500 412"><path d="M1469.57 396.14 L1470.83 396.14 L1471.02 397.40 L1472.03 397.82 L1473.05 397.06 L1473.94 397.95 L1473.18 398.97 L1473.60 399.98 L1474.86 400.17 L1474.86 401.43 L1473.60 401.62 L1473.18 402.63 L1473.94 403.65 L1473.05 404.54 L1472.03 403.78 L1471.02 404.20 L1470.83 405.46 L1469.57 405.46 L1469.38 404.20 L1468.37 403.78 L1467.35 404.54 L1466.46 403.65 L1467.22 402.63 L1466.80 401.62 L1465.54 401.43 L1465.54 400.17 L1466.80 399.98 L1467.22 398.97 L1466.46 397.95 L1467.35 397.06 L1468.37 397.82 L1469.38 397.40Z M1472.2 400.8 A2.0 2.0 0 1 0 1468.2 400.8 A2.0 2.0 0 1 0 1472.2 400.8Z" fill="#a4a4a4" fill-rule="evenodd" stroke="#a4a4a4" stroke-width=".6" stroke-linejoin="round"/><rect x="1484.6" y="400" width="6.6" height="5" rx=".8" fill="#9c9c9c"/><path d="M1486 400 V398 Q1486 395.8 1487.9 395.8 Q1489.8 395.8 1489.8 398 V400" fill="none" stroke="#9c9c9c" stroke-width="1.1"/></svg>
<div style="left:1282.2px;top:412.4px;width:218px;height:289.30000000000007px;overflow:hidden;background:#363636" id="ll">
<div style="left:0.0px;top:0.0px;width:1.6px;height:300px;background:#262626;"></div>
<div style="left:1.6px;top:0.0px;width:4.8px;height:300px;background:#474747;"></div>
<div style="left:6.4px;top:0.0px;width:0.8px;height:300px;background:#222;"></div>
<div style="left:202.8px;top:0.0px;width:0.8px;height:300px;background:#222;"></div>
<div style="left:7.0px;top:0.6px;width:195.8px;height:29.3px;background:#4f6c93;"></div>
<div style="left:20.0px;top:0.6px;width:0.9px;height:29.3px;background:#1c2836;"></div>
<div style="left:50.2px;top:0.6px;width:0.9px;height:29.3px;background:#1c2836;"></div>
<div style="left:21.4px;top:1.6px;width:28px;height:27.4px;background:#2a2a2a;border:1px solid #5f7da6;box-sizing:border-box;"></div>
<div style="left:13.2px;top:29.9px;width:190px;height:1px;background:#161616;"></div>
<div style="left:28.6px;top:32.5px;width:26.8px;height:25.6px;background:#2b2b2b;border:1px solid #3e3e3e;box-sizing:border-box;"></div>
<div style="left:13.2px;top:59.8px;width:190px;height:1px;background:#161616;"></div>
<div style="left:28.6px;top:62.4px;width:26.8px;height:25.6px;background:#2b2b2b;border:1px solid #3e3e3e;box-sizing:border-box;"></div>
<div style="left:13.2px;top:89.7px;width:190px;height:1px;background:#161616;"></div>
<div style="left:28.6px;top:92.3px;width:26.8px;height:25.6px;background:#2b2b2b;border:1px solid #3e3e3e;box-sizing:border-box;"></div>
<div style="left:13.2px;top:119.7px;width:190px;height:1px;background:#161616;"></div>
<div style="left:28.6px;top:122.3px;width:26.8px;height:25.6px;background:#2b2b2b;border:1px solid #3e3e3e;box-sizing:border-box;"></div>
<div style="left:13.2px;top:149.6px;width:190px;height:1px;background:#161616;"></div>
<div style="left:28.6px;top:152.2px;width:26.8px;height:25.6px;background:#2b2b2b;border:1px solid #3e3e3e;box-sizing:border-box;"></div>
<div style="left:13.2px;top:179.5px;width:190px;height:1px;background:#161616;"></div>
<div style="left:28.6px;top:182.1px;width:26.8px;height:25.6px;background:#2b2b2b;border:1px solid #3e3e3e;box-sizing:border-box;"></div>
<div style="left:13.2px;top:209.4px;width:190px;height:1px;background:#161616;"></div>
<div style="left:28.6px;top:212.0px;width:26.8px;height:25.6px;background:#2b2b2b;border:1px solid #3e3e3e;box-sizing:border-box;"></div>
<div style="left:13.2px;top:239.3px;width:190px;height:1px;background:#161616;"></div>
<div style="left:28.6px;top:241.9px;width:26.8px;height:25.6px;background:#2b2b2b;border:1px solid #3e3e3e;box-sizing:border-box;"></div>
<div style="left:13.2px;top:269.3px;width:190px;height:1px;background:#161616;"></div>
<div style="left:28.6px;top:271.9px;width:26.8px;height:25.6px;background:#2b2b2b;border:1px solid #3e3e3e;box-sizing:border-box;"></div>
<div style="left:13.0px;top:29.9px;width:0.9px;height:300px;background:#161616;"></div>
<div style="left:26.8px;top:29.9px;width:0.9px;height:300px;background:#161616;"></div>
<div style="left:56.6px;top:29.9px;width:0.9px;height:300px;background:#161616;"></div>
</div>
<svg style="left:0;top:412.4px;overflow:hidden" width="1500" height="289.30000000000007" viewBox="0 412.4 1500 289.30000000000007"><g transform="translate(1304.6,415)" fill="none" stroke="#504b32" stroke-width=".6"><path d="M4 9 Q5 3 6.4 1.6 Q9 2 9.8 5 Q12 9 14 10 L17 9.4"/><path d="M11 2 Q11.6 5 16 5.2 Q20 4.6 21 2"/><path d="M23 1 Q24 3 22 5.4 Q22 9 22.4 11 Q20 14 18 13.4 Q16.6 15 17 17.6 Q18 19 17.4 21 Q15 23 13 25"/><path d="M13.6 10 Q13.4 14 14.6 16 L13 18"/><path d="M8 17 Q10 20 10.4 22 L12 21.6"/><path d="M24 14 Q23 18 24 22"/></g><path d="M1293 425.8 L1295.6 428.6 L1298.2 425.8" fill="none" stroke="#b6c4d8" stroke-width="1.1"/><circle cx="1472.4" cy="428" r="3.7" fill="#ababab"/><g transform="translate(1310.8,444.90000000000003)"><path d="M13 2 Q9 6 10.6 15 Q11.6 22 13.4 25" fill="none" stroke="#8a7a3a" stroke-width="0.8" stroke-linecap="round"/></g><circle cx="1472.4" cy="457.8" r="3.7" fill="#ababab"/><path d="M1300.6 453.2 V462.40000000000003" stroke="#d4d4d4" stroke-width=".9"/><path d="M1305.2 454.0 Q1301 457.8 1305.2 461.6" fill="none" stroke="#d4d4d4" stroke-width=".9"/><rect x="1299.4" y="456.6" width="2.4" height="2.4" fill="#363636" stroke="#d4d4d4" stroke-width=".7"/><rect x="1299.8" y="452.40000000000003" width="1.6" height="1.2" fill="#d4d4d4"/><rect x="1299.8" y="462.0" width="1.6" height="1.2" fill="#d4d4d4"/><g transform="translate(1310.8,474.82000000000005)"><path d="M20 3 Q14 10 9 17 Q6 21 6 26" fill="none" stroke="#8a7838" stroke-width="0.8" stroke-linecap="round"/></g><circle cx="1472.4" cy="487.72" r="3.7" fill="#ababab"/><path d="M1300.6 483.12 V492.32000000000005" stroke="#d4d4d4" stroke-width=".9"/><path d="M1305.2 483.92 Q1301 487.72 1305.2 491.52000000000004" fill="none" stroke="#d4d4d4" stroke-width=".9"/><rect x="1299.4" y="486.52000000000004" width="2.4" height="2.4" fill="#363636" stroke="#d4d4d4" stroke-width=".7"/><rect x="1299.8" y="482.32000000000005" width="1.6" height="1.2" fill="#d4d4d4"/><rect x="1299.8" y="491.92" width="1.6" height="1.2" fill="#d4d4d4"/><g transform="translate(1310.8,504.74)"><path d="M1 7 L8 12 L15 18 L21 18.6 L26 21" fill="none" stroke="#9a9a9a" stroke-width="0.8" stroke-linecap="round"/></g><circle cx="1472.4" cy="517.64" r="3.7" fill="#ababab"/><path d="M1300.6 513.04 V522.24" stroke="#d4d4d4" stroke-width=".9"/><path d="M1305.2 513.84 Q1301 517.64 1305.2 521.4399999999999" fill="none" stroke="#d4d4d4" stroke-width=".9"/><rect x="1299.4" y="516.4399999999999" width="2.4" height="2.4" fill="#363636" stroke="#d4d4d4" stroke-width=".7"/><rect x="1299.8" y="512.24" width="1.6" height="1.2" fill="#d4d4d4"/><rect x="1299.8" y="521.84" width="1.6" height="1.2" fill="#d4d4d4"/><g transform="translate(1310.8,534.6600000000001)"><path d="M1 4 Q4 12 8 18 Q10 20 16 19 L24 17" fill="none" stroke="#6a5e34" stroke-width="0.8" stroke-linecap="round"/></g><circle cx="1472.4" cy="547.5600000000001" r="3.7" fill="#ababab"/><path d="M1300.6 542.96 V552.1600000000001" stroke="#d4d4d4" stroke-width=".9"/><path d="M1305.2 543.7600000000001 Q1301 547.5600000000001 1305.2 551.36" fill="none" stroke="#d4d4d4" stroke-width=".9"/><rect x="1299.4" y="546.36" width="2.4" height="2.4" fill="#363636" stroke="#d4d4d4" stroke-width=".7"/><rect x="1299.8" y="542.1600000000001" width="1.6" height="1.2" fill="#d4d4d4"/><rect x="1299.8" y="551.7600000000001" width="1.6" height="1.2" fill="#d4d4d4"/><g transform="translate(1310.8,564.58)"><path d="M2 8 Q8 6 14 10 Q20 13 26 20" fill="none" stroke="#bdbdbd" stroke-width="0.9" stroke-linecap="round"/></g><circle cx="1472.4" cy="577.48" r="3.7" fill="#ababab"/><path d="M1300.6 572.88 V582.08" stroke="#d4d4d4" stroke-width=".9"/><path d="M1305.2 573.6800000000001 Q1301 577.48 1305.2 581.28" fill="none" stroke="#d4d4d4" stroke-width=".9"/><rect x="1299.4" y="576.28" width="2.4" height="2.4" fill="#363636" stroke="#d4d4d4" stroke-width=".7"/><rect x="1299.8" y="572.08" width="1.6" height="1.2" fill="#d4d4d4"/><rect x="1299.8" y="581.6800000000001" width="1.6" height="1.2" fill="#d4d4d4"/><g transform="translate(1310.8,594.5000000000001)"><path d="M2 13 Q8 12.4 12 14 Q16 16.4 20 15.2 L26 14.6" fill="none" stroke="#f4f4f4" stroke-width="1.6" stroke-linecap="round"/></g><circle cx="1472.4" cy="607.4000000000001" r="3.7" fill="#ababab"/><path d="M1300.6 602.8000000000001 V612.0000000000001" stroke="#d4d4d4" stroke-width=".9"/><path d="M1305.2 603.6000000000001 Q1301 607.4000000000001 1305.2 611.2" fill="none" stroke="#d4d4d4" stroke-width=".9"/><rect x="1299.4" y="606.2" width="2.4" height="2.4" fill="#363636" stroke="#d4d4d4" stroke-width=".7"/><rect x="1299.8" y="602.0000000000001" width="1.6" height="1.2" fill="#d4d4d4"/><rect x="1299.8" y="611.6000000000001" width="1.6" height="1.2" fill="#d4d4d4"/><g transform="translate(1310.8,624.4200000000001)"><path d="M2 20 Q8 16 14 14.6 Q22 13 26 6" fill="none" stroke="#f0f0f0" stroke-width="1.4" stroke-linecap="round"/></g><circle cx="1472.4" cy="637.32" r="3.7" fill="#ababab"/><path d="M1300.6 632.72 V641.9200000000001" stroke="#d4d4d4" stroke-width=".9"/><path d="M1305.2 633.5200000000001 Q1301 637.32 1305.2 641.12" fill="none" stroke="#d4d4d4" stroke-width=".9"/><rect x="1299.4" y="636.12" width="2.4" height="2.4" fill="#363636" stroke="#d4d4d4" stroke-width=".7"/><rect x="1299.8" y="631.9200000000001" width="1.6" height="1.2" fill="#d4d4d4"/><rect x="1299.8" y="641.5200000000001" width="1.6" height="1.2" fill="#d4d4d4"/><g transform="translate(1310.8,654.34)"><path d="M2 19 Q10 17 16 15 Q22 12.4 26 10" fill="none" stroke="#6e5e38" stroke-width="0.8" stroke-linecap="round"/></g><circle cx="1472.4" cy="667.24" r="3.7" fill="#ababab"/><path d="M1300.6 662.64 V671.84" stroke="#d4d4d4" stroke-width=".9"/><path d="M1305.2 663.44 Q1301 667.24 1305.2 671.04" fill="none" stroke="#d4d4d4" stroke-width=".9"/><rect x="1299.4" y="666.04" width="2.4" height="2.4" fill="#363636" stroke="#d4d4d4" stroke-width=".7"/><rect x="1299.8" y="661.84" width="1.6" height="1.2" fill="#d4d4d4"/><rect x="1299.8" y="671.44" width="1.6" height="1.2" fill="#d4d4d4"/><g transform="translate(1310.8,684.2600000000001)"><path d="M2 24 Q12 20 18 14 Q23 9 26 5" fill="none" stroke="#6e5e38" stroke-width="0.8" stroke-linecap="round"/></g><circle cx="1472.4" cy="697.1600000000001" r="3.7" fill="#ababab"/><path d="M1300.6 692.5600000000001 V701.7600000000001" stroke="#d4d4d4" stroke-width=".9"/><path d="M1305.2 693.3600000000001 Q1301 697.1600000000001 1305.2 700.96" fill="none" stroke="#d4d4d4" stroke-width=".9"/><rect x="1299.4" y="695.96" width="2.4" height="2.4" fill="#363636" stroke="#d4d4d4" stroke-width=".7"/><rect x="1299.8" y="691.7600000000001" width="1.6" height="1.2" fill="#d4d4d4"/><rect x="1299.8" y="701.3600000000001" width="1.6" height="1.2" fill="#d4d4d4"/></svg>
<div style="left:0;top:412.4px;width:1500px;height:289.30000000000007px;overflow:hidden">
<span class="t" style="left:1335.7px;top:9.60px;font-size:10px;line-height:14px;color:#f6f6f6;transform:scaleX(0.9394)">roads</span>
<span class="t" style="left:1341.9px;top:40.00px;font-size:10px;line-height:14px;color:#b2b2b2;transform:scaleX(0.9110)">Curve</span>
<span class="t" style="left:1341.9px;top:69.92px;font-size:10px;line-height:14px;color:#b2b2b2;transform:scaleX(0.9110)">Curve</span>
<span class="t" style="left:1341.9px;top:99.84px;font-size:10px;line-height:14px;color:#b2b2b2;transform:scaleX(0.9110)">Curve</span>
<span class="t" style="left:1341.9px;top:129.76px;font-size:10px;line-height:14px;color:#b2b2b2;transform:scaleX(0.8935)">Curves</span>
<span class="t" style="left:1341.9px;top:159.68px;font-size:10px;line-height:14px;color:#b2b2b2;transform:scaleX(0.9110)">Curve</span>
<span class="t" style="left:1341.9px;top:189.60px;font-size:10px;line-height:14px;color:#b2b2b2;transform:scaleX(0.9110)">Curve</span>
<span class="t" style="left:1341.9px;top:219.52px;font-size:10px;line-height:14px;color:#b2b2b2;transform:scaleX(0.9110)">Curve</span>
<span class="t" style="left:1341.9px;top:249.44px;font-size:10px;line-height:14px;color:#b2b2b2;transform:scaleX(0.9110)">Curve</span>
<span class="t" style="left:1341.9px;top:279.36px;font-size:10px;line-height:14px;color:#b2b2b2;transform:scaleX(0.9110)">Curve</span>
</div>
<svg style="left:1486px;top:412px;" width="14" height="290" viewBox="0 0 14 290"><path d="M4.6 10.4 L7.1 5.4 L9.6 10.4Z" fill="#8a8a8a"/><path d="M4.6 280 L9.6 280 L7.1 285Z" fill="#8a8a8a"/></svg>
<div style="left:1490.2px;top:456.2px;width:5.6px;height:51.6px;background:#6c6c6c;border-radius:2.8px;"></div>
<svg style="left:0px;top:0px;" width="1500" height="724" viewBox="0 0 1500 724"><rect x="1291.8" y="709.6" width="8.4" height="7.6" fill="none" stroke="#8a8a8a" stroke-width="1"/><rect x="1290" y="707.8" width="8.4" height="7.6" fill="#363636" stroke="#9a9a9a" stroke-width="1"/><rect x="1288.4" y="706" width="8.2" height="7.6" fill="#363636" stroke="#a6a6a6" stroke-width="1.1"/><rect x="1366.8" y="706.4" width="11.2" height="9.6" fill="#a6a6a6"/><circle cx="1372.4" cy="711.2" r="2.7" fill="#2c2c2c"/><circle cx="1388.5" cy="711.2" r="5.8" fill="none" stroke="#a6a6a6" stroke-width="1"/><path d="M1392.2 707.8 A5 5 0 0 1 1385.2 715 Z" fill="#a6a6a6"/><path d="M1400 705.4 H1409.8 M1400 717.2 H1409.8" stroke="#a6a6a6" stroke-width=".9"/><path d="M1401 714.8 V708.4 H1403.4 M1401 711.4 H1403" fill="none" stroke="#a6a6a6" stroke-width="1.2"/><path d="M1404.6 708 L1409.4 714.8 M1409.4 708 L1404.6 714.8" stroke="#a6a6a6" stroke-width="1.2"/><path d="M1419.4 706.4 H1424.6 L1426.6 716 H1416.4Z" fill="none" stroke="#7c7c7c" stroke-width="1"/><path d="M1421.8 706.4 L1421.2 716 M1418.4 709.6 H1425.4 M1417.4 712.8 H1426" stroke="#7c7c7c" stroke-width=".8"/><path d="M1457.4 706.6 H1452 V717.2 H1460.2 V709.6" fill="none" stroke="#a6a6a6" stroke-width="1"/><path d="M1454 710.6 H1458.4 M1454 712.6 H1458.4 M1454 714.6 H1458.4" stroke="#a6a6a6" stroke-width=".8"/><path d="M1460.2 704.8 V708.6 M1458.4 706.6 H1462" stroke="#a6a6a6" stroke-width="1"/><rect x="1468.4" y="705.6" width="8.6" height="11.6" fill="none" stroke="#a6a6a6" stroke-width="1"/><rect x="1470.3" y="707.6" width="1.5" height="1.5" fill="#a6a6a6"/><rect x="1473.7" y="707.6" width="1.5" height="1.5" fill="#a6a6a6"/><rect x="1472.0" y="709.3" width="1.5" height="1.5" fill="#a6a6a6"/><rect x="1470.3" y="711.0" width="1.5" height="1.5" fill="#a6a6a6"/><rect x="1473.7" y="711.0" width="1.5" height="1.5" fill="#a6a6a6"/><rect x="1472.0" y="712.7" width="1.5" height="1.5" fill="#a6a6a6"/><rect x="1470.3" y="714.4" width="1.5" height="1.5" fill="#a6a6a6"/><rect x="1473.7" y="714.4" width="1.5" height="1.5" fill="#a6a6a6"/><path d="M1484.2 707.6 H1493.4 M1487 707.4 V705.8 H1490.6 V707.4" fill="none" stroke="#8e8e8e" stroke-width="1"/><path d="M1485.4 709 V717 H1492.2 V709" fill="none" stroke="#8e8e8e" stroke-width="1"/><path d="M1487.6 710 V715.4 M1490 710 V715.4" stroke="#8e8e8e" stroke-width=".8"/></svg>
<div style="left:1282.2px;top:722.8px;width:218px;height:24px;background:#262626;"></div>
<div style="left:1296.9px;top:724.3px;width:46.9px;height:22.5px;background:#363636;"></div>
<svg style="left:1287px;top:730.6px;" width="6" height="8" viewBox="0 0 6 8"><rect x="1" y="1" width=".9" height="6.2" fill="#9a9a9a"/><rect x="3.4" y="1" width=".9" height="6.2" fill="#9a9a9a"/></svg>
<svg style="left:1485px;top:728.3px;" width="10" height="12" viewBox="0 0 10 12"><rect x=".4" y="1.60" width="8.4" height="1.4" fill="#dedede"/><rect x=".4" y="5.30" width="8.4" height="1.4" fill="#dedede"/><rect x=".4" y="9.00" width="8.4" height="1.4" fill="#dedede"/></svg>
<span class="t" style="left:1301.3px;top:727.60px;font-size:9.6px;line-height:13.6px;color:#f4f4f4;transform:scaleX(0.8816);">Transform</span>
<span class="t" style="left:1347.8px;top:727.60px;font-size:9.6px;line-height:13.6px;color:#bcbcbc;transform:scaleX(0.9236);">Navigator</span>
<span class="t" style="left:1394.4px;top:727.60px;font-size:9.6px;line-height:13.6px;color:#bcbcbc;transform:scaleX(0.9277);">History</span>
<div style="left:1349.2px;top:757px;width:52.2px;height:15.4px;background:#222222;border-radius:2px;"></div>
<div style="left:1426px;top:757px;width:52px;height:15.4px;background:#222222;border-radius:2px;"></div>
<span class="t" style="left:1338.7px;top:758.60px;font-size:8.8px;line-height:12.8px;color:#a8a8a8;transform:scaleX(0.8831);">X:</span>
<span class="t" style="left:1412.6999999999998px;top:758.60px;font-size:8.8px;line-height:12.8px;color:#a8a8a8;transform:scaleX(0.9401);">W:</span>
<span class="t" style="left:1354px;top:758.20px;font-size:9.6px;line-height:13.6px;color:#ececec;transform:scaleX(0.8984);">591,5 mm</span>
<span class="t" style="left:1430.8px;top:758.20px;font-size:9.6px;line-height:13.6px;color:#ececec;transform:scaleX(0.9031);">942,6 mm</span>
<div style="left:1349.2px;top:776.4px;width:52.2px;height:15.4px;background:#222222;border-radius:2px;"></div>
<div style="left:1426px;top:776.4px;width:52px;height:15.4px;background:#222222;border-radius:2px;"></div>
<span class="t" style="left:1339.8px;top:777.90px;font-size:8.8px;line-height:12.8px;color:#a8a8a8;transform:scaleX(0.7965);">Y:</span>
<span class="t" style="left:1415.0px;top:777.90px;font-size:8.8px;line-height:12.8px;color:#a8a8a8;transform:scaleX(0.8686);">H:</span>
<span class="t" style="left:1354px;top:777.50px;font-size:9.6px;line-height:13.6px;color:#ececec;transform:scaleX(0.9148);">255 mm</span>
<span class="t" style="left:1430.8px;top:777.50px;font-size:9.6px;line-height:13.6px;color:#ececec;transform:scaleX(0.9031);">816,1 mm</span>
<div style="left:1349.2px;top:800.6px;width:52.2px;height:15.4px;background:#222222;border-radius:2px;"></div>
<div style="left:1426px;top:800.6px;width:52px;height:15.4px;background:#222222;border-radius:2px;"></div>
<span class="t" style="left:1338.7px;top:801.90px;font-size:8.8px;line-height:12.8px;color:#a8a8a8;transform:scaleX(0.8343);">R:</span>
<span class="t" style="left:1416.0px;top:801.90px;font-size:8.8px;line-height:12.8px;color:#a8a8a8;transform:scaleX(0.7984);">S:</span>
<span class="t" style="left:1354px;top:801.50px;font-size:9.6px;line-height:13.6px;color:#ececec;transform:scaleX(0.9322);">0 °</span>
<span class="t" style="left:1430.8px;top:801.50px;font-size:9.6px;line-height:13.6px;color:#ececec;transform:scaleX(0.9068);">0 °</span>
<svg style="left:1390.9px;top:803.2px;" width="10" height="10" viewBox="0 0 10 10"><path d="M2.6 3.6 L5 6 L7.4 3.6" fill="none" stroke="#dcdcdc" stroke-width="1.2"/></svg>
<svg style="left:1467.4px;top:803.2px;" width="10" height="10" viewBox="0 0 10 10"><path d="M2.6 3.6 L5 6 L7.4 3.6" fill="none" stroke="#dcdcdc" stroke-width="1.2"/></svg>
<div style="left:1298.3px;top:777px;width:24.2px;height:23.8px;background:#6a6a6a;"></div>
<div style="left:1294.6px;top:773.2px;width:7.6px;height:7.6px;background:#ffffff;"></div>
<div style="left:1296.0px;top:786.6px;width:4.6px;height:4.6px;background:#b4b4b4;"></div>
<div style="left:1296.0px;top:798.6px;width:4.6px;height:4.6px;background:#b4b4b4;"></div>
<div style="left:1308.1000000000001px;top:774.6px;width:4.6px;height:4.6px;background:#b4b4b4;"></div>
<div style="left:1308.1000000000001px;top:786.6px;width:4.6px;height:4.6px;background:#b4b4b4;"></div>
<div style="left:1308.1000000000001px;top:798.6px;width:4.6px;height:4.6px;background:#b4b4b4;"></div>
<div style="left:1320.2px;top:774.6px;width:4.6px;height:4.6px;background:#b4b4b4;"></div>
<div style="left:1320.2px;top:786.6px;width:4.6px;height:4.6px;background:#b4b4b4;"></div>
<div style="left:1320.2px;top:798.6px;width:4.6px;height:4.6px;background:#b4b4b4;"></div>
<svg style="left:1483px;top:760px;" width="14" height="28" viewBox="0 0 14 28"><path d="M3.4 4.4 H8.8 V6.4 M3.4 24 H8.8 V22" fill="none" stroke="#bdbdbd" stroke-width="1"/><rect x="6.2" y="6.8" width="5" height="6.6" rx="1.8" fill="none" stroke="#bdbdbd" stroke-width="1"/><rect x="6.2" y="15.2" width="5" height="6.6" rx="1.8" fill="none" stroke="#bdbdbd" stroke-width="1"/><path d="M8.7 11.4 V17.2" stroke="#bdbdbd" stroke-width="1"/></svg>
<div style="left:1442px;top:823px;width:24px;height:20.6px;background:#414141;border-radius:2px;"></div>
<div style="left:1467px;top:823px;width:11px;height:20.6px;background:#414141;border-radius:2px;"></div>
<svg style="left:1442px;top:823px;" width="40" height="22" viewBox="0 0 40 22"><rect x="6" y="4.6" width="11.6" height="11.4" fill="none" stroke="#5c5c5c" stroke-width="1" stroke-dasharray="3.4 2.2"/><rect x="6" y="10.4" width="6.4" height="6" rx="1.2" fill="#5c5c5c"/><path d="M28 9 L30.5 11.6 L33 9" fill="none" stroke="#dcdcdc" stroke-width="1.2"/></svg>
</div></body></html>
